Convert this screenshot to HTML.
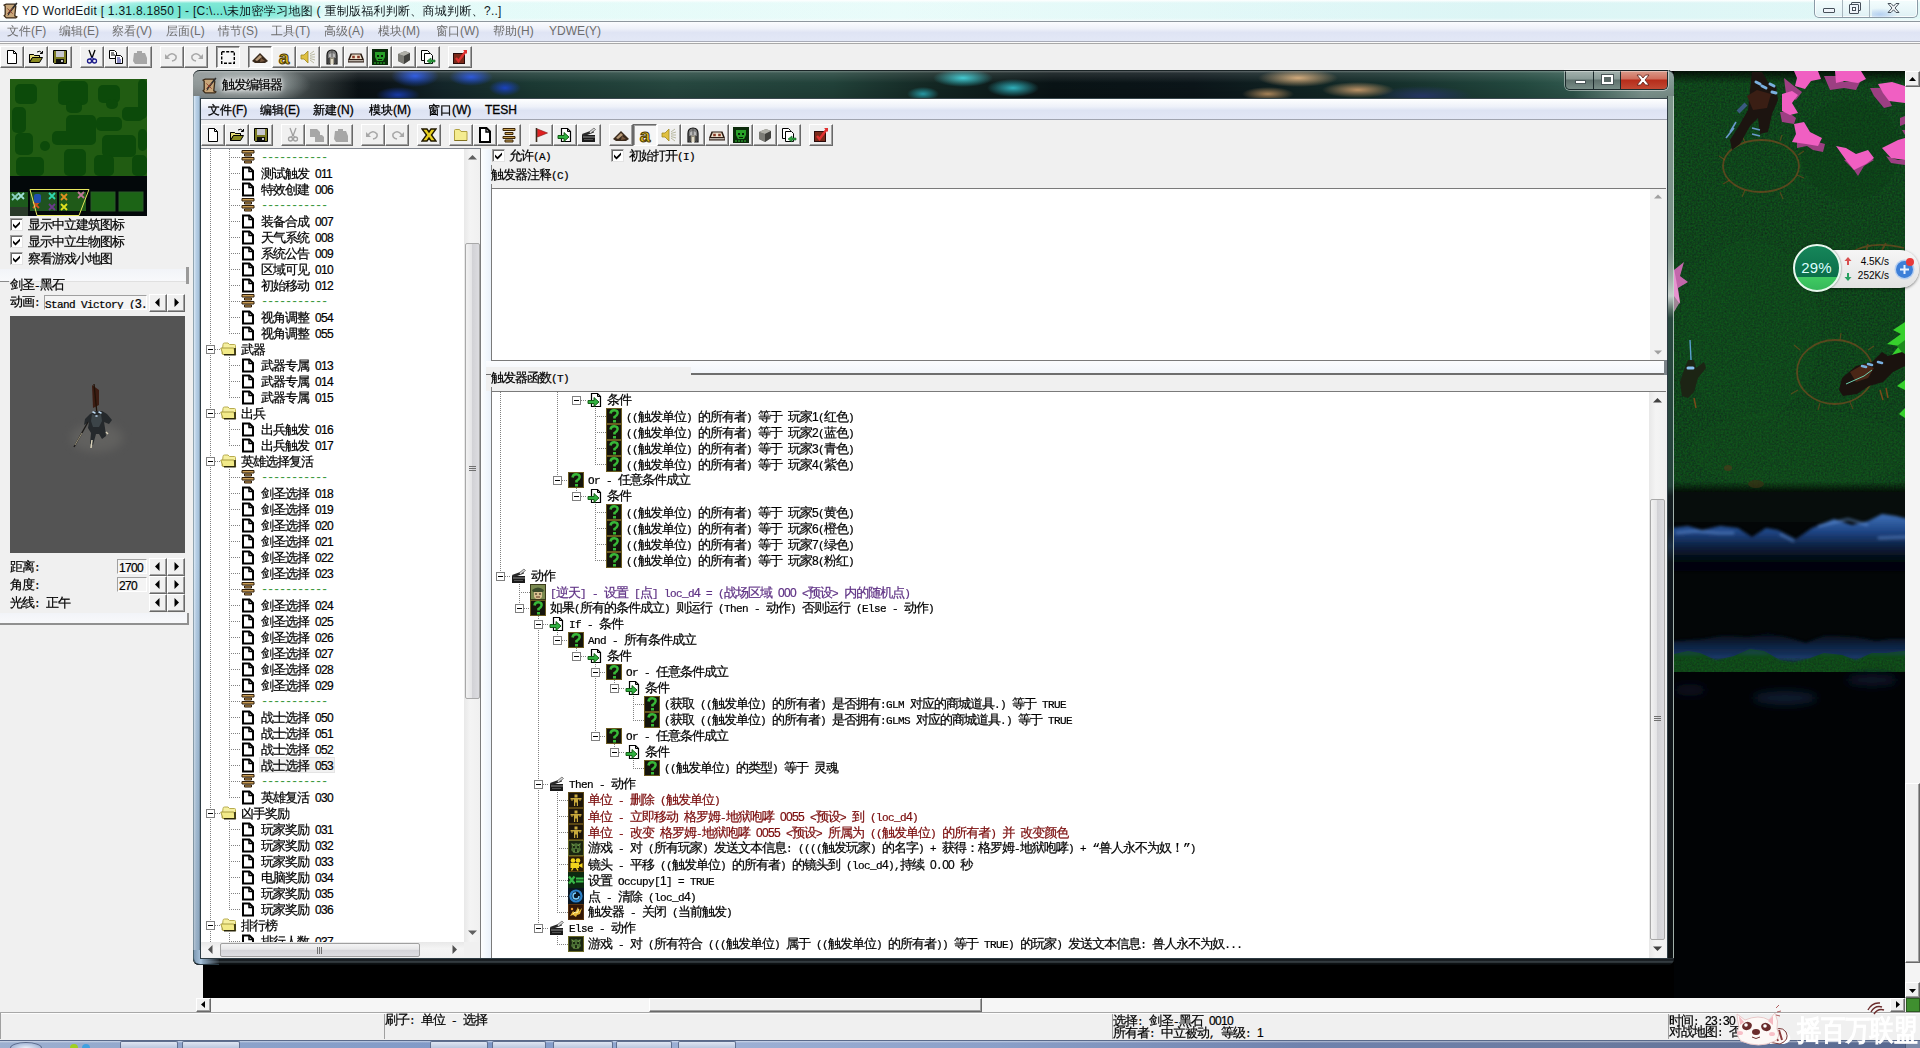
<!DOCTYPE html>
<html lang="zh-CN"><head><meta charset="utf-8"><title>YD WorldEdit</title>
<style>

html,body{margin:0;padding:0;}
body{width:1920px;height:1048px;overflow:hidden;position:relative;background:#f0f0f0;
 font-family:"Liberation Sans","WenQuanYi Zen Hei",sans-serif;font-size:12px;color:#000;}
div{position:absolute;box-sizing:border-box;}
svg{position:absolute;overflow:visible;}
.t{white-space:nowrap;line-height:14px;height:14px;}
.s{font-family:"Liberation Mono","WenQuanYi Zen Hei",monospace;font-size:13px;letter-spacing:-1px;margin-top:1px;-webkit-text-stroke-width:0.22px;}
.s .l{font-size:11px;letter-spacing:-0.6px;}
.s .d{font-family:"Liberation Sans",sans-serif;font-size:12px;letter-spacing:-0.674px;}
.u{font-family:"Liberation Sans","WenQuanYi Zen Hei",sans-serif;font-size:12px;}
.btn{background:#f0f0f0;border:1px solid;border-color:#fff #696969 #696969 #fff;box-shadow:inset -1px -1px 0 #a0a0a0;}
.btnp{background:#f6f6f6;border:1px solid;border-color:#696969 #fff #fff #696969;box-shadow:inset 1px 1px 0 #a0a0a0;}
.sunk{border:1px solid;border-color:#a0a0a0 #fff #fff #a0a0a0;}
.cb{width:13px;height:13px;background:#fff;border:1px solid;border-color:#a0a0a0 #e3e3e3 #e3e3e3 #a0a0a0;box-shadow:inset 1px 1px 0 #696969;}

</style></head>
<body>
<svg width="0" height="0" style="left:0;top:0"><defs><symbol id="i-we" viewBox="0 0 16 16"><path d="M2 3l2-1h8l1 2-1 9 2 1-1 1H4l-2-2 1-1V4z" fill="#c9a77a" stroke="#3a2a18" stroke-width="1.2"/><path d="M6 11L14 1" stroke="#2a2a2a" stroke-width="1.6"/><path d="M6 11l-1 2 2-1z" fill="#222"/><path d="M5 6l5 5M10 6l-5 5" stroke="#8a3a2a" stroke-width=".8"/></symbol><symbol id="i-new" viewBox="0 0 16 16"><path d="M3.500 1.500h6l3 3v10h-9z" fill="#fff" stroke="#000"/><path d="M9.500 1.500v3h3" fill="none" stroke="#000"/></symbol><symbol id="i-open" viewBox="0 0 16 16"><path d="M1.500 5.500h4l1 1h5v2" fill="#e8e080" stroke="#000" /><path d="M1.500 13.500v-8h4l1 1h5v2h-7z" fill="#e6dc78" stroke="#000"/><path d="M1.500 13.500l3-5h10l-3 5z" fill="#8a8a20" stroke="#000"/><path d="M9 3q3-2 5 1" fill="none" stroke="#000"/><path d="M14.500 2v2.500H12" fill="none" stroke="#000"/></symbol><symbol id="i-save" viewBox="0 0 16 16"><path d="M1.500 1.500h13v13h-12l-1-1z" fill="#7a7a22" stroke="#000"/><rect x="4" y="2" width="8" height="6" fill="#c8c8d0"/><rect x="4" y="10" width="8" height="4" fill="#101010"/><rect x="9" y="11" width="2" height="2" fill="#c8c8c8"/></symbol><symbol id="i-cut" viewBox="0 0 16 16"><path d="M5 1l3 8M11 1L8 9" stroke="#000" stroke-width="1.300" fill="none"/><circle cx="5.500" cy="12" r="2" fill="none" stroke="#1a1a8a" stroke-width="1.300"/><circle cx="10.500" cy="12" r="2" fill="none" stroke="#1a1a8a" stroke-width="1.300"/><path d="M8 8l-2 2.500M8 8l2 2.500" stroke="#1a1a8a" stroke-width="1.200"/></symbol><symbol id="i-cut-d" viewBox="0 0 16 16"><path d="M5 1l3 8M11 1L8 9" stroke="#a0a0a0" stroke-width="1.300" fill="none"/><circle cx="5.500" cy="12" r="2" fill="none" stroke="#a0a0a0" stroke-width="1.300"/><circle cx="10.500" cy="12" r="2" fill="none" stroke="#a0a0a0" stroke-width="1.300"/><path d="M8 8l-2 2.500M8 8l2 2.500" stroke="#a0a0a0" stroke-width="1.200"/></symbol><symbol id="i-copy" viewBox="0 0 16 16"><path d="M1.500 1.500h5l2 2v6h-7z" fill="#fff" stroke="#000"/><path d="M3 4h3M3 6h4" stroke="#000"/><path d="M7.500 6.500h5l2 2v6h-7z" fill="#fff" stroke="#000"/><path d="M9 9h3M9 11h4M9 13h4" stroke="#1a1a8a"/></symbol><symbol id="i-copy-d" viewBox="0 0 16 16"><path d="M1 2h7l3 3v3h2l2 2v5H6V10H1z" fill="#a6a6a6"/></symbol><symbol id="i-paste-d" viewBox="0 0 16 16"><path d="M2 4h3V2h5v2h3l2 5v6H3L1 12z" fill="#a6a6a6"/></symbol><symbol id="i-undo-d" viewBox="0 0 16 16"><path d="M3 8q5-6 9-1q1 4-4 5" fill="none" stroke="#a8a8a8" stroke-width="1.600"/><path d="M1 5v5h5z" fill="#a8a8a8"/></symbol><symbol id="i-redo-d" viewBox="0 0 16 16"><path d="M13 8q-5-6-9-1q-1 4 4 5" fill="none" stroke="#a8a8a8" stroke-width="1.600"/><path d="M15 5v5h-5z" fill="#a8a8a8"/></symbol><symbol id="i-select" viewBox="0 0 16 16"><rect x="1.700" y="2.700" width="12.600" height="11.600" fill="none" stroke="#000" stroke-width="1.400" stroke-dasharray="3 1.500"/></symbol><symbol id="i-terrain" viewBox="0 0 16 16"><path d="M0 12L8 4l8 8-3 2H3z" fill="#3a2a1c"/><path d="M3 11l5-5 2 2-5 4z" fill="#b89a78"/><path d="M9 9l4 3-5 1z" fill="#7a5a40"/></symbol><symbol id="i-a" viewBox="0 0 16 16"><text x="8" y="14.500" font-family="Liberation Sans,sans-serif" font-weight="bold" font-size="19" text-anchor="middle" fill="#e6c020" stroke="#4a3806" stroke-width="1">a</text></symbol><symbol id="i-sound" viewBox="0 0 16 16"><path d="M1 6h3l4-4v12l-4-4H1z" fill="#e0c040" stroke="#a08820" stroke-width=".8"/><path d="M10 8h5M10 5l4-3M10 11l4 3M10 6.500l5-1.500M10 9.500l5 1.500" stroke="#b8b8a0" stroke-width="1"/></symbol><symbol id="i-helm" viewBox="0 0 16 16"><path d="M3 15V6.500Q3 1 8 1t5 5.500V15h-3.200V9.500H6.200V15z" fill="#7c7c7c" stroke="#101010" stroke-width="1.200"/><path d="M5 5.500Q8 2.500 11 5.500V8H5z" fill="#b8b8b8"/><path d="M4.500 9v5M11.500 9v5" stroke="#404040" stroke-width="1"/><path d="M7 8.500V15M9 8.500V15" stroke="#d8cfb4" stroke-width="1.300"/><path d="M8 2v6" stroke="#505050" stroke-width="1"/></symbol><symbol id="i-region" viewBox="0 0 16 16"><path d="M0 11l2.500-6.500h11L16 11v2.500H0z" fill="#2a1a12"/><path d="M2 10l1.800-4.500h8.400L14 10z" fill="#efe2cc"/><path d="M4.200 6.800h2.600v2.400H4.200zM9.200 6.800h2.600v2.400H9.200z" fill="#8a3a28"/><path d="M.5 11.800h15" stroke="#f6efe6" stroke-width="1"/></symbol><symbol id="i-orc" viewBox="0 0 16 16"><rect x="0" y="0" width="16" height="16" fill="#0a2a0a"/><path d="M3 3h10v5l-2 4H5L3 8z" fill="#28a028"/><path d="M5 6h2v2H5zM9 6h2v2H9zM6 10h4v1H6z" fill="#062006"/><path d="M2 14h2M5 14h2M8 14h2M11 14h2" stroke="#30c030"/></symbol><symbol id="i-cube" viewBox="0 0 16 16"><path d="M2 5l7-3 5 2v7l-6 4-6-3z" fill="#70706c"/><path d="M2 5l6 2 6-3-5-2z" fill="#b0b0a8"/><path d="M8 7v8l6-4V4z" fill="#42423e"/><path d="M2 5l6 2v8l-6-3z" fill="#7c7c76"/></symbol><symbol id="i-import" viewBox="0 0 16 16"><path d="M1.500 1.500h6l2 2v8h-8z" fill="#fff" stroke="#000"/><path d="M4.500 4.500h6l2 2v8h-8z" fill="#fff" stroke="#000"/><path d="M15 11h-4V9l-4 3 4 3v-2h4z" fill="#30a040" stroke="#106020" stroke-width=".6"/></symbol><symbol id="i-check" viewBox="0 0 16 16"><rect x="1.500" y="4.500" width="11" height="10" fill="#7a2a1a" stroke="#2a0a0a"/><path d="M4 9l2.500 3L14 2" fill="none" stroke="#e03030" stroke-width="2.400"/><path d="M11 1h4v4z" fill="#e03030"/></symbol><symbol id="i-x" viewBox="0 0 16 16"><path d="M1 2h5l2 3 2-3h5l-4.500 6L15 14h-5L8 11l-2 3H1l4.500-6z" fill="#e8d020" stroke="#201800" stroke-width="1.400"/></symbol><symbol id="i-folder" viewBox="0 0 16 16"><path d="M1.500 3.500q0-1 1-1h4l1.500 2h6v9h-12.500z" fill="#f4ec90" stroke="#b0a040"/><path d="M1.500 13.500h12.500" stroke="#807020"/></symbol><symbol id="i-doc" viewBox="0 0 16 16"><path d="M3 1h6.500L13 4.500V15H3z" fill="#fff" stroke="#000" stroke-width="2"/><path d="M9 1v4h4" fill="none" stroke="#000" stroke-width="1.400"/></symbol><symbol id="i-sep" viewBox="0 0 16 16"><path d="M2 1.500h12v2H2zM4 5.500h8v2H4zM2 9.500h12v2H2zM4 13h8v2H4z" fill="#c8a050" stroke="#3a2408" stroke-width="1"/></symbol><symbol id="i-flag" viewBox="0 0 16 16"><path d="M3.500 1v14" stroke="#3a2a1a" stroke-width="1.600"/><path d="M4.500 2l10 4-10 4z" fill="#e02020" stroke="#801010" stroke-width=".6"/></symbol><symbol id="i-cond" viewBox="0 0 16 16"><path d="M4.500 1.500h6l3 3v10h-9z" fill="#fff" stroke="#000" stroke-width="1.200"/><path d="M10.500 1.500v3h3" fill="none" stroke="#000"/><path d="M1 8.500h6v-3l5 4.500-5 4.500v-3H1z" fill="#30b040" stroke="#0a500a" stroke-width=".9"/></symbol><symbol id="i-act" viewBox="0 0 16 16"><path d="M1 8h13v7H1z" fill="#1a1a1a"/><path d="M1 7l11-4 1 2.500L2 9.500z" fill="#2a2a2a"/><path d="M2 10h12" stroke="#909090"/><path d="M8 5l5-4 1.500 1.500-5 4z" fill="#d8d8d8" stroke="#404040" stroke-width=".6"/><path d="M3 12.500h9" stroke="#505050"/></symbol><symbol id="i-q" viewBox="0 0 16 16"><rect x="0" y="0" width="16" height="16" fill="#15140c"/><rect x=".5" y=".5" width="15" height="15" fill="none" stroke="#6a5a20"/><path d="M4.500 5.500Q5 2 8.500 2.200T11.500 5.500Q11 7.500 8.500 9V10.500" fill="none" stroke="#38b838" stroke-width="2.600"/><rect x="7" y="12" width="3" height="2.500" fill="#38b838"/></symbol><symbol id="i-unit" viewBox="0 0 16 16"><rect x="0" y="0" width="16" height="16" fill="#1c150a"/><rect x=".5" y=".5" width="15" height="15" fill="none" stroke="#5a4614"/><rect x="6.500" y="2.500" width="3" height="3" fill="#c9a93c"/><path d="M2.500 6h11v1.500h-1V9h-1V7.500H10V14H8.800v-3.500H7.200V14H6V7.500H4.500V9h-1V7.500h-1z" fill="#c9a93c"/></symbol><symbol id="i-game" viewBox="0 0 16 16"><rect x="0" y="0" width="16" height="16" fill="#1a2410"/><rect x=".5" y=".5" width="15" height="15" fill="none" stroke="#6a6a28"/><path d="M3 3l3 1 2-1 2 1 3-1-1 4 1 3-3 3H6L3 10l1-3z" fill="#4a6e34"/><path d="M5 6h2v2H5zM9 6h2v2H9zM7 9h2v3H7z" fill="#1c2a12"/><path d="M4 4l2 2M12 4l-2 2M5 12l2-1M11 12l-2-1" stroke="#7a9a4a" stroke-width=".8"/></symbol><symbol id="i-cam" viewBox="0 0 16 16"><rect x="0" y="0" width="16" height="16" fill="#2a1c08"/><rect x=".5" y=".5" width="15" height="15" fill="none" stroke="#5a4210"/><circle cx="5" cy="4.500" r="2.300" fill="#f2d41c"/><circle cx="10" cy="4.500" r="2.300" fill="#f2d41c"/><path d="M2.500 7h8.500v5H2.500z" fill="#f2d41c"/><path d="M11 9l3.500-2v5L11 10z" fill="#f2d41c"/><path d="M5 12l-1.500 2.500M8.500 12l1.500 2.500" stroke="#f2d41c" stroke-width="1.400"/></symbol><symbol id="i-set" viewBox="0 0 16 16"><rect x="0" y="0" width="16" height="16" fill="#0c2a10"/><path d="M1 4.500l5.500 7M6.500 4.500l-5.500 7" stroke="#38b848" stroke-width="2.200"/><path d="M8 6.500h7.500M8 9.500h7.500" stroke="#38b848" stroke-width="1.800"/></symbol><symbol id="i-point" viewBox="0 0 16 16"><rect x="0" y="0" width="16" height="16" fill="#0a1622"/><circle cx="8" cy="8" r="5.500" fill="none" stroke="#2a80c8" stroke-width="2.200"/><path d="M8 5a3 3 0 1 0 3 3" fill="none" stroke="#7ad0ff" stroke-width="1.400"/><circle cx="8" cy="8" r="1" fill="#0a1622"/></symbol><symbol id="i-trig" viewBox="0 0 16 16"><rect x="0" y="0" width="16" height="16" fill="#321606"/><rect x=".5" y=".5" width="15" height="15" fill="none" stroke="#5a3410"/><path d="M2 12l3-5 2 2 3-6 1 4 3-3-2 6-3 1-1 2-3-2z" fill="#e8b83a"/><path d="M5 10l2-2 2 1 2-4" stroke="#fff0a0" stroke-width="1" fill="none"/><circle cx="4" cy="5" r="1.200" fill="#f0a030"/></symbol><symbol id="i-nt" viewBox="0 0 16 16"><rect x="0" y="0" width="16" height="16" fill="#7a8a50"/><rect x=".5" y=".5" width="15" height="15" fill="none" stroke="#3a3a1a"/><path d="M2 6q6-5 12 0l-1 2H3z" fill="#3a4a2a"/><path d="M4 8h8v5l-2 2H6l-2-2z" fill="#d8c090"/><path d="M5 10h2M9 10h2" stroke="#201808"/><path d="M6 13h4" stroke="#5a3020"/></symbol><symbol id="i-tdoc" viewBox="0 0 14 15"><path d="M2 1.500h6.500L12 5v8.500H2z" fill="#fff" stroke="#000" stroke-width="2"/><path d="M8 1.500V5.500h4" fill="none" stroke="#000" stroke-width="1.500"/></symbol><symbol id="i-tsep" viewBox="0 0 14 14"><path d="M1 .5h12v2.500H1zM3.500 4h7v2h-7zM1 7.500h12V10H1zM3.500 11h7v2h-7z" fill="#c89c54" stroke="#2e1c08" stroke-width="1"/></symbol><symbol id="i-tfolder" viewBox="0 0 17 16"><path d="M3 3.500q0-1.500 1.500-1.500h3.500l1.500 1.500h5q1 0 1 1V13H2z" fill="#f6f0a0" stroke="#b8ac50" stroke-width="1"/><path d="M.8 7h13l2 6.500H3z" fill="#f2ea88" stroke="#a89c40" stroke-width="1"/><path d="M15 7v6.800H4" fill="none" stroke="#2a2608" stroke-width="1.600"/></symbol></defs></svg>
<div style="left:0px;top:0px;width:1920px;height:21px;background:linear-gradient(90deg,#ffffff 0,#fbfffe 76px,rgba(255,255,255,0) 92px),radial-gradient(ellipse 120px 14px at 205px 11px,#6fe3cf 0,#7fe8d6 55%,rgba(150,238,225,.75) 85%,rgba(190,245,238,.2) 100%),linear-gradient(90deg,#e9fbfa 0,#eefcfb 500px,#f4fdfd 900px,#e3f5f7 1500px,#eaf8f9 1920px);"></div>
<div style="left:0px;top:0px;width:1920px;height:3px;background:linear-gradient(#ffffff,rgba(255,255,255,0));"></div>
<div style="left:0px;top:18px;width:1920px;height:3px;background:linear-gradient(rgba(255,255,255,0),#f4fbfb);"></div>
<div style="left:0px;top:21px;width:1920px;height:1px;background:#8e979e;"></div>
<svg style="left:2px;top:2px" width="17" height="17" viewBox="0 0 16 16"><use href="#i-we"/></svg>
<div class="t u" style="left:22px;top:4px;font-size:12px;color:#10181c;letter-spacing:0.27px;">YD WorldEdit [ 1.31.8.1850 ] - [C:\...\未加密学习地图 ( 重制版福利判断、商城判断、?..]</div>
<div style="left:1814px;top:0px;width:104px;height:18px;border:1px solid #8a9aa6;border-top:none;border-radius:0 0 5px 5px;background:linear-gradient(#f4fdfd,#e9f7f9 55%,#def0f4);box-shadow:inset 0 0 0 1px rgba(255,255,255,.8);"></div>
<div style="left:1842px;top:0px;width:1px;height:17px;background:#a8b6be;"></div>
<div style="left:1869px;top:0px;width:1px;height:17px;background:#a8b6be;"></div>
<div style="left:1872px;top:8px;width:26px;height:9px;background:radial-gradient(ellipse at 30% 70%,rgba(170,200,240,.8),rgba(200,225,250,0) 70%);"></div>
<div style="left:1823px;top:8px;width:12px;height:5px;border:1px solid #46505a;background:#eef4fa;border-radius:1px;"></div>
<div style="left:1851px;top:2px;width:10px;height:9px;border:1px solid #46505a;background:#eef4fa;border-radius:1px;"></div>
<div style="left:1849px;top:4px;width:10px;height:10px;border:1px solid #46505a;background:#eef4fa;border-radius:1px;"></div>
<div style="left:1852px;top:7px;width:4px;height:4px;border:1px solid #46505a;background:#fff;"></div>
<svg style="left:1887px;top:3px" width="13" height="10" viewBox="0 0 13 10"><path d="M1 .5h3l2.500 2.700L9 .5h3L8 5l4 4.500H9L6.500 6.800 4 9.500H1L5 5z" fill="#f4f8fa" stroke="#46505a" stroke-width="1"/></svg>
<div style="left:0px;top:22px;width:1920px;height:20px;background:linear-gradient(#fbfcfe 0,#eef1f9 35%,#dfe4f4 55%,#e3e8f6 100%);border-bottom:1px solid #a9acb8;"></div>
<div style="left:0px;top:42px;width:1920px;height:1px;background:#fbfbfb;"></div>
<div style="left:0px;top:43px;width:1920px;height:1px;background:#a9a9a9;"></div>
<div class="t u" style="left:7px;top:24px;color:#6d6d6d;">文件(F)</div>
<div class="t u" style="left:59px;top:24px;color:#6d6d6d;">编辑(E)</div>
<div class="t u" style="left:112px;top:24px;color:#6d6d6d;">察看(V)</div>
<div class="t u" style="left:166px;top:24px;color:#6d6d6d;">层面(L)</div>
<div class="t u" style="left:218px;top:24px;color:#6d6d6d;">情节(S)</div>
<div class="t u" style="left:271px;top:24px;color:#6d6d6d;">工具(T)</div>
<div class="t u" style="left:324px;top:24px;color:#6d6d6d;">高级(A)</div>
<div class="t u" style="left:378px;top:24px;color:#6d6d6d;">模块(M)</div>
<div class="t u" style="left:436px;top:24px;color:#6d6d6d;">窗口(W)</div>
<div class="t u" style="left:493px;top:24px;color:#6d6d6d;">帮助(H)</div>
<div class="t u" style="left:549px;top:24px;color:#6d6d6d;">YDWE(Y)</div>
<div style="left:0px;top:44px;width:1920px;height:27px;background:#f0f0f0;"></div>
<div class="btn" style="left:0px;top:46px;width:24px;height:22px;"><svg style="left:3px;top:2px" width="16" height="16" viewBox="0 0 16 16"><use href="#i-new"/></svg></div>
<div class="btn" style="left:24px;top:46px;width:24px;height:22px;"><svg style="left:3px;top:2px" width="16" height="16" viewBox="0 0 16 16"><use href="#i-open"/></svg></div>
<div class="btn" style="left:48px;top:46px;width:24px;height:22px;"><svg style="left:3px;top:2px" width="16" height="16" viewBox="0 0 16 16"><use href="#i-save"/></svg></div>
<div class="btn" style="left:80px;top:46px;width:24px;height:22px;"><svg style="left:3px;top:2px" width="16" height="16" viewBox="0 0 16 16"><use href="#i-cut"/></svg></div>
<div class="btn" style="left:104px;top:46px;width:24px;height:22px;"><svg style="left:3px;top:2px" width="16" height="16" viewBox="0 0 16 16"><use href="#i-copy"/></svg></div>
<div class="btn" style="left:128px;top:46px;width:24px;height:22px;"><svg style="left:3px;top:2px" width="16" height="16" viewBox="0 0 16 16"><use href="#i-paste-d"/></svg></div>
<div class="btn" style="left:160px;top:46px;width:24px;height:22px;"><svg style="left:3px;top:2px" width="16" height="16" viewBox="0 0 16 16"><use href="#i-undo-d"/></svg></div>
<div class="btn" style="left:184px;top:46px;width:24px;height:22px;"><svg style="left:3px;top:2px" width="16" height="16" viewBox="0 0 16 16"><use href="#i-redo-d"/></svg></div>
<div class="btnp" style="left:216px;top:46px;width:24px;height:22px;"><svg style="left:3px;top:2px" width="16" height="16" viewBox="0 0 16 16"><use href="#i-select"/></svg></div>
<div class="btnp" style="left:248px;top:46px;width:24px;height:22px;"><svg style="left:3px;top:2px" width="16" height="16" viewBox="0 0 16 16"><use href="#i-terrain"/></svg></div>
<div class="btn" style="left:272px;top:46px;width:24px;height:22px;"><svg style="left:3px;top:2px" width="16" height="16" viewBox="0 0 16 16"><use href="#i-a"/></svg></div>
<div class="btn" style="left:296px;top:46px;width:24px;height:22px;"><svg style="left:3px;top:2px" width="16" height="16" viewBox="0 0 16 16"><use href="#i-sound"/></svg></div>
<div class="btn" style="left:320px;top:46px;width:24px;height:22px;"><svg style="left:3px;top:2px" width="16" height="16" viewBox="0 0 16 16"><use href="#i-helm"/></svg></div>
<div class="btn" style="left:344px;top:46px;width:24px;height:22px;"><svg style="left:3px;top:2px" width="16" height="16" viewBox="0 0 16 16"><use href="#i-region"/></svg></div>
<div class="btn" style="left:368px;top:46px;width:24px;height:22px;"><svg style="left:3px;top:2px" width="16" height="16" viewBox="0 0 16 16"><use href="#i-orc"/></svg></div>
<div class="btn" style="left:392px;top:46px;width:24px;height:22px;"><svg style="left:3px;top:2px" width="16" height="16" viewBox="0 0 16 16"><use href="#i-cube"/></svg></div>
<div class="btn" style="left:416px;top:46px;width:24px;height:22px;"><svg style="left:3px;top:2px" width="16" height="16" viewBox="0 0 16 16"><use href="#i-import"/></svg></div>
<div class="btn" style="left:448px;top:46px;width:24px;height:22px;"><svg style="left:3px;top:2px" width="16" height="16" viewBox="0 0 16 16"><use href="#i-check"/></svg></div>
<div style="left:196px;top:71px;width:1709px;height:927px;background:#000;"></div>
<div style="left:190px;top:71px;width:13px;height:927px;background:#f0f0f0;"></div>
<div style="left:1905px;top:71px;width:15px;height:927px;background:#f4f4f4;"></div>
<div class="btn" style="left:1905px;top:71px;width:15px;height:16px;"><svg style="left:3px;top:4px" width="8" height="6" viewBox="0 0 8 6"><path d="M0 5h7L3.500 1z" fill="#000"/></svg></div>
<div class="btn" style="left:1905px;top:982px;width:15px;height:16px;"><svg style="left:3px;top:5px" width="8" height="6" viewBox="0 0 8 6"><path d="M0 1h7L3.500 5z" fill="#000"/></svg></div>
<div class="btn" style="left:1905px;top:783px;width:15px;height:180px;"></div>
<div style="left:196px;top:998px;width:1709px;height:14px;background:#f6f6f6;"></div>
<div class="btn" style="left:196px;top:998px;width:15px;height:14px;"><svg style="left:3px;top:2px" width="6" height="8" viewBox="0 0 6 8"><path d="M5 0v7L1 3.500z" fill="#000"/></svg></div>
<div class="btn" style="left:1890px;top:998px;width:15px;height:14px;"><svg style="left:4px;top:2px" width="6" height="8" viewBox="0 0 6 8"><path d="M1 0v7l4-3.500z" fill="#000"/></svg></div>
<div class="btn" style="left:649px;top:998px;width:333px;height:14px;"></div>
<div style="left:1906px;top:998px;width:14px;height:14px;background:#3f8f2f;border:1px solid #2a5a1f;"></div>
<div style="left:0px;top:71px;width:190px;height:941px;background:#f0f0f0;"></div>
<svg style="left:10px;top:79px" width="137" height="137" viewBox="0 0 137 137"><rect width="137" height="137" fill="#03080a"/><rect width="137" height="97" fill="#215c12"/><rect x="5" y="5" width="22" height="20" rx="5" fill="#0c4a0a"/><rect x="2" y="28" width="14" height="26" rx="5" fill="#0c4a0a"/><rect x="48" y="2" width="30" height="24" rx="5" fill="#0c4a0a"/><rect x="56" y="22" width="16" height="12" rx="5" fill="#0c4a0a"/><rect x="88" y="6" width="22" height="18" rx="5" fill="#0c4a0a"/><rect x="96" y="20" width="12" height="10" rx="5" fill="#0c4a0a"/><rect x="128" y="0" width="9" height="40" rx="5" fill="#0c4a0a"/><rect x="112" y="28" width="22" height="14" rx="5" fill="#0c4a0a"/><rect x="5" y="54" width="18" height="22" rx="5" fill="#0c4a0a"/><rect x="42" y="52" width="24" height="14" rx="5" fill="#0c4a0a"/><rect x="56" y="36" width="30" height="30" rx="5" fill="#0c4a0a"/><rect x="86" y="38" width="26" height="14" rx="5" fill="#0c4a0a"/><rect x="92" y="56" width="34" height="22" rx="5" fill="#0c4a0a"/><rect x="128" y="50" width="9" height="22" rx="5" fill="#0c4a0a"/><rect x="6" y="78" width="28" height="19" rx="5" fill="#0c4a0a"/><rect x="54" y="70" width="22" height="27" rx="5" fill="#0c4a0a"/><rect x="84" y="76" width="20" height="21" rx="5" fill="#0c4a0a"/><rect x="122" y="76" width="15" height="21" rx="5" fill="#0c4a0a"/><rect x="30" y="62" width="10" height="10" rx="5" fill="#0c4a0a"/><rect x="0" y="113" width="18" height="19" fill="#1d5a1c"/><rect x="0" y="128" width="18" height="9" fill="#2a3a2a"/><rect x="20" y="113" width="27" height="19" fill="#1f5220"/><rect x="49" y="113" width="27" height="19" fill="#1f5a18"/><rect x="81" y="113" width="24" height="19" fill="#1c6416" stroke="#2a5a28"/><rect x="109" y="113" width="24" height="19" fill="#1c6416" stroke="#2a5a28"/><path d="M2 115l6 6M8 115l-6 6" stroke="#8ad0c0" stroke-width="1.800"/><path d="M8 114l6 6M14 114l-6 6" stroke="#a0e0d8" stroke-width="1.800"/><path d="M39 114l6 6M45 114l-6 6" stroke="#30d8b0" stroke-width="1.800"/><path d="M51 115l6 6M57 115l-6 6" stroke="#e09020" stroke-width="1.800"/><path d="M68 113l6 6M74 113l-6 6" stroke="#c07898" stroke-width="1.800"/><path d="M51 125l6 6M57 125l-6 6" stroke="#e0e020" stroke-width="1.800"/><path d="M23 123l6 6M29 123l-6 6" stroke="#d05020" stroke-width="1.800"/><path d="M39 125l6 6M45 125l-6 6" stroke="#6a3a8a" stroke-width="1.800"/><rect x="24" y="115" width="7" height="9" rx="2" fill="#2050b0"/><path d="M20 110.500H79L69 136.500H27z" fill="none" stroke="#e8e860" stroke-width="1"/></svg>
<div class="cb" style="left:10px;top:218px;width:13px;height:13px;"><svg style="left:1px;top:1px" width="9" height="9" viewBox="0 0 9 9"><path d="M1 3.500l2.500 2.500L8 1.500v2.500L3.500 8.500 1 6z" fill="#000"/></svg></div>
<div class="t s" style="left:28px;top:218px;">显示中立建筑图标</div>
<div class="cb" style="left:10px;top:235px;width:13px;height:13px;"><svg style="left:1px;top:1px" width="9" height="9" viewBox="0 0 9 9"><path d="M1 3.500l2.500 2.500L8 1.500v2.500L3.500 8.500 1 6z" fill="#000"/></svg></div>
<div class="t s" style="left:28px;top:235px;">显示中立生物图标</div>
<div class="cb" style="left:10px;top:252px;width:13px;height:13px;"><svg style="left:1px;top:1px" width="9" height="9" viewBox="0 0 9 9"><path d="M1 3.500l2.500 2.500L8 1.500v2.500L3.500 8.500 1 6z" fill="#000"/></svg></div>
<div class="t s" style="left:28px;top:252px;">察看游戏小地图</div>
<div style="left:0px;top:269px;width:189px;height:13px;background:linear-gradient(#f2f4f8,#f8f9fb);border-right:2px solid #a0a0a0;border-bottom:1px solid #e0e0e0;"></div>
<div style="left:186px;top:267px;width:3px;height:17px;background:#9a9a9a;"></div>
<div style="left:0px;top:281px;width:9px;height:1px;background:#8a8a8a;"></div>
<div class="t s" style="left:10px;top:278px;">剑圣<span class="l">-</span>黑石</div>
<div class="t s" style="left:10px;top:295px;">动画<span class="l">:</span></div>
<div class="sunk" style="left:44px;top:295px;width:103px;height:15px;background:#f4f4f4;overflow:hidden;"><div class="t s" style="left:0px;top:0px;"><span class="l">Stand Victory (</span><span class="d">3</span><span class="l">.</span></div></div>
<div class="btn" style="left:149px;top:294px;width:18px;height:18px;"><svg style="left:5px;top:3px" width="5" height="9" viewBox="0 0 5 9"><path d="M4.500 0v9L0 4.500z" fill="#000"/></svg></div><div class="btn" style="left:167px;top:294px;width:18px;height:18px;"><svg style="left:6px;top:3px" width="5" height="9" viewBox="0 0 5 9"><path d="M.5 0v9L5 4.500z" fill="#000"/></svg></div>
<div style="left:10px;top:316px;width:175px;height:237px;background:#545454;"></div>
<svg style="left:60px;top:380px" width="80" height="80" viewBox="60 380 80 80"><defs><filter id="hb" x="-30%" y="-30%" width="160%" height="160%"><feGaussianBlur stdDeviation="5"/></filter></defs><ellipse cx="97" cy="438" rx="26" ry="14" fill="#767470" opacity=".4" filter="url(#hb)"/><path d="M92 385l7 5 0 15-6 3z" fill="#3c1c12"/><path d="M94 384l3 30" stroke="#201208" stroke-width="1.300"/><path d="M85 419l5-5 6-3 6 0 5 3 5 6-3 4-5-2 1 6 1 8-4 3-3-5-3 0-3 11-3-1 1-11-3-5 1-6-5 3z" fill="#25292c"/><path d="M92 414l4 2 5-2 1 7-3 6-6 0-2-6z" fill="#3c4448"/><path d="M93 412l2 1M99 412l2 1M96 416l1 0" stroke="#bcd8f0" stroke-width="1.600" stroke-linecap="round"/><path d="M74 447L88 422" stroke="#1c1a18" stroke-width="1.400"/><path d="M75 445L82 433" stroke="#c8c0a0" stroke-width=".7"/><path d="M92 440l-1 8M106 432l2 2" stroke="#d8d0b8" stroke-width="1.500"/></svg>
<div class="t s" style="left:10px;top:560px;">距离<span class="l">:</span></div>
<div class="sunk" style="left:117px;top:559px;width:30px;height:15px;background:#f4f4f4;overflow:hidden;"><div class="t s" style="left:1px;top:0px;"><span class="d">1700</span></div></div>
<div class="btn" style="left:149px;top:558px;width:18px;height:18px;"><svg style="left:5px;top:3px" width="5" height="9" viewBox="0 0 5 9"><path d="M4.500 0v9L0 4.500z" fill="#000"/></svg></div><div class="btn" style="left:167px;top:558px;width:18px;height:18px;"><svg style="left:6px;top:3px" width="5" height="9" viewBox="0 0 5 9"><path d="M.5 0v9L5 4.500z" fill="#000"/></svg></div>
<div class="t s" style="left:10px;top:578px;">角度<span class="l">:</span></div>
<div class="sunk" style="left:117px;top:577px;width:30px;height:15px;background:#f4f4f4;overflow:hidden;"><div class="t s" style="left:1px;top:0px;"><span class="d">270</span></div></div>
<div class="btn" style="left:149px;top:576px;width:18px;height:18px;"><svg style="left:5px;top:3px" width="5" height="9" viewBox="0 0 5 9"><path d="M4.500 0v9L0 4.500z" fill="#000"/></svg></div><div class="btn" style="left:167px;top:576px;width:18px;height:18px;"><svg style="left:6px;top:3px" width="5" height="9" viewBox="0 0 5 9"><path d="M.5 0v9L5 4.500z" fill="#000"/></svg></div>
<div class="t s" style="left:10px;top:596px;">光线<span class="l">: </span>正午</div>
<div class="btn" style="left:149px;top:594px;width:18px;height:18px;"><svg style="left:5px;top:3px" width="5" height="9" viewBox="0 0 5 9"><path d="M4.500 0v9L0 4.500z" fill="#000"/></svg></div><div class="btn" style="left:167px;top:594px;width:18px;height:18px;"><svg style="left:6px;top:3px" width="5" height="9" viewBox="0 0 5 9"><path d="M.5 0v9L5 4.500z" fill="#000"/></svg></div>
<div style="left:0px;top:613px;width:189px;height:12px;background:linear-gradient(#f2f4f8,#f8f9fb);border-right:2px solid #909090;border-bottom:2px solid #909090;"></div>
<svg style="left:1674px;top:71px;overflow:hidden" width="231" height="927" viewBox="1674 71 231 927"><defs><filter id="gn" x="0" y="0" width="100%" height="100%" color-interpolation-filters="sRGB"><feTurbulence type="fractalNoise" baseFrequency="0.55" numOctaves="2" seed="7" result="n"/><feColorMatrix type="matrix" values="0.1 0 0 0 0.02  0 0.44 0 0 0.05  0 0 0.12 0 0.05  0 0 0 0 1"/></filter><linearGradient id="gfade" x1="0" y1="0" x2="0" y2="1"><stop offset="0" stop-color="#000" stop-opacity=".75"/><stop offset=".03" stop-color="#000" stop-opacity="0"/><stop offset=".975" stop-color="#000" stop-opacity="0"/><stop offset="1" stop-color="#000" stop-opacity=".8"/></linearGradient><linearGradient id="b1" x1="0" y1="0" x2="0" y2="1"><stop offset="0" stop-color="#3f70b8"/><stop offset=".3" stop-color="#1f4686"/><stop offset=".6" stop-color="#0a1c38"/><stop offset=".85" stop-color="#030608"/><stop offset="1" stop-color="#030607"/></linearGradient><linearGradient id="b2" x1="0" y1="0" x2="0" y2="1"><stop offset="0" stop-color="#050a12"/><stop offset=".5" stop-color="#14305c"/><stop offset="1" stop-color="#234a88"/></linearGradient><filter id="wb" x="-5%" y="-20%" width="110%" height="140%"><feGaussianBlur stdDeviation="1.600"/></filter><filter id="wb2" x="-20%" y="-50%" width="140%" height="200%"><feGaussianBlur stdDeviation="4"/></filter></defs><rect x="1674" y="71" width="231" height="927" fill="#000"/><rect x="1674" y="71" width="231" height="421" fill="#0d431a"/><rect x="1674" y="71" width="231" height="421" filter="url(#gn)" opacity=".55"/><ellipse cx="1750" cy="330" rx="70" ry="90" fill="#14601f" opacity=".15"/><ellipse cx="1850" cy="150" rx="50" ry="50" fill="#0a3c14" opacity=".3"/><ellipse cx="1800" cy="450" rx="110" ry="40" fill="#16661f" opacity=".12"/><rect x="1674" y="71" width="231" height="421" fill="url(#gfade)"/><g fill="none" stroke="#8a4a20" stroke-width="1.800" opacity=".6"><ellipse cx="1761" cy="166" rx="38" ry="26"/><ellipse cx="1835" cy="372" rx="38" ry="32"/><path d="M1852 252q20-12 52-4"/><path d="M1856 258l-4-8m14 2l2-8m14 6l4-7"/></g><g stroke="#8a4c1c" stroke-width="1.200" opacity=".55"><path d="M1725 160l-6-4M1730 180l-7 4M1745 190l-3 7M1780 192l3 7M1797 175l7 3M1798 155l6-4M1780 141l2-6M1745 142l-3-6M1800 350l-6-5M1798 390l-7 4M1820 403l-2 7M1850 402l3 7M1868 350l6-4M1840 340l1-7"/></g><path d="M1784 78l10 8 8 6-6 8-10-6z" fill="#9c3f82"/><path d="M1794 71h24l3 8-10 2-6 8-10-3 2-8z" fill="#f05fc2"/><path d="M1824 76l12 0 8 6 16 0 -4 8-12-2-14 2z" fill="#9c3f82"/><path d="M1835 71h26l5 8-8 4-14-2-8 2z" fill="#f05fc2"/><path d="M1870 88l10 0 8 10 4 8-8 2-10-12z" fill="#9c3f82"/><path d="M1878 84l14-2 13 4v17l-16-2-6-8z" fill="#f05fc2"/><path d="M1780 112l8 0 8 6-2 6-12-2z" fill="#9c3f82"/><path d="M1782 94l10-3 6 4-6 8 6 10-8 2-8-4z" fill="#f05fc2"/><path d="M1797 142l14-2 14 4-2 8-10-2-6-4-10 2z" fill="#9c3f82"/><path d="M1794 124l10-2 6 10 12 6-4 8-12-2-14-2 4-8z" fill="#f05fc2"/><path d="M1844 160l10 10 4 6 6-10 10-6-4-2z" fill="#9c3f82"/><path d="M1836 146l10 2 10 6 12-4 6 8-8 6-12 6-8-10z" fill="#f05fc2"/><path d="M1886 156l12 4 7 0v5l-14-2z" fill="#9c3f82"/><path d="M1882 148l16-8 7-2v22l-14-2z" fill="#f05fc2"/><path d="M1900 118l5-2v8l-5 2zM1902 130l3 0v5z" fill="#9c3f82"/><path d="M1674 270l10-8-4 14 8 6-10 6 2 16-6-8z" fill="#f070d0" opacity=".8"/><path d="M1674 268v44l6-10z" fill="#ffb0e8" opacity=".6"/><path d="M1905 322l-12 8 8 4-14 10 12 2-8 10 14-2zM1905 380l-8 6 8 4zM1905 408l-6 6 6 4z" fill="#36d02c"/><path d="M1905 340l-8 6 8 10z" fill="#1c8a1c"/><g><path d="M1752 72l10 0 6 10 8 4 2 14-6 14-4 18-8 2-2-16-8 8-10 18-8 6-2-10 10-16 8-14 2-20z" fill="#1c1410"/><path d="M1747 96l10-6 14 4-4 14-14 2z" fill="#3a1e14"/><path d="M1756 82l4 2M1762 86l4 2M1770 84l4 2M1772 92l4 1" stroke="#7ab0e0" stroke-width="3" stroke-linecap="round"/><path d="M1730 132l6-10M1726 138l8-10M1752 128l8 2M1752 134l8 2" stroke="#6a9acc" stroke-width="1.600"/><path d="M1738 112l8-8" stroke="#3a5a80" stroke-width="4"/></g><g><path d="M1842 378l14-12 16-4 10-10 6 4 14-4 3 2v12l-12 6-10 10-14 4-12 8-14 2-4-6z" fill="#1a120e"/><path d="M1850 372l14-8 10 4-6 10-12 4z" fill="#4a2616"/><path d="M1862 366l4 1M1868 364l4 1M1878 362l4 1" stroke="#7ab0e0" stroke-width="2.600" stroke-linecap="round"/><path d="M1846 384l18-8 8-6" stroke="#70d0b0" stroke-width="1" fill="none"/><path d="M1880 390l3 10M1886 388l2 10" stroke="#7a4a1a" stroke-width="1.500"/></g><g><path d="M1688 360l6 0 2 8 8-6 2 6-8 10-4 14-6 6-6-2-2-14 4-12z" fill="#1c2414"/><path d="M1690 340l1 20" stroke="#5aa0d0" stroke-width="1.400"/><path d="M1688 368l5 0" stroke="#8ac0f0" stroke-width="3" stroke-linecap="round"/><path d="M1694 398l2 10" stroke="#7a4a1a" stroke-width="1.500"/></g><ellipse cx="1728" cy="468" rx="4" ry="3" fill="#4a3a1a" opacity=".7"/><ellipse cx="1756" cy="484" rx="8" ry="4" fill="#3a3014" opacity=".7"/><rect x="1674" y="492" width="231" height="210" fill="#030607"/><rect x="1674" y="492" width="231" height="30" fill="#070d0c"/><g filter="url(#wb)"><path d="M1664 529l24-3 14 4 18-4 18 2 14 9 14-9 12 2 18 9 16-11 22-9 18 6 16-4 14-7 14 2 20 5v50h-252z" fill="url(#b1)"/><path d="M1676 533l20-2 22 2 16 0M1780 534l14 7M1818 526l30-7 20 6M1878 538l30 -1" stroke="#6a9ae0" stroke-width="2.500" opacity=".5" fill="none"/><path d="M1664 642l40-3 20-4 24 2 20-4 18 4 20 6 20-8 30 2 20 4 14-2 30 0v22h-256z" fill="url(#b2)" opacity=".75"/></g><path d="M1664 656l24-5 12 2 16 7 18-4 16-7 14 2 16 9 14 2 16-4 14-5 18 2 14 5 16-7 14 0 24-3v22h-246z" fill="#0f4a17"/><rect x="1674" y="658" width="231" height="14" filter="url(#gn)" opacity=".4"/><path d="M1664 656l24-5 12 2 16 7 18-4 16-7 14 2 16 9 14 2 16-4 14-5 18 2 14 5 16-7 14 0 24-3v5h-246z" fill="#1b3c6e" opacity=".45" filter="url(#wb)"/><rect x="1674" y="672" width="231" height="326" fill="#010305"/><g filter="url(#wb2)"><ellipse cx="1785" cy="698" rx="32" ry="7" fill="#0d2038" opacity=".8"/><ellipse cx="1872" cy="680" rx="26" ry="6" fill="#0b1a2e" opacity=".8"/><ellipse cx="1690" cy="690" rx="16" ry="6" fill="#0a1626" opacity=".7"/></g></svg>
<div style="left:1826px;top:250px;width:93px;height:38px;border-radius:0 19px 19px 0;background:linear-gradient(#f6f6f6,#e2e2e2);box-shadow:0 1px 3px rgba(0,0,0,.5);"></div>
<div style="left:1793px;top:244px;width:48px;height:48px;border-radius:50%;background:linear-gradient(#16865a 0,#0b6e4a 71%,#3fca62 71%,#35b85a 100%);border:2px solid #e8f8ee;box-shadow:0 0 2px rgba(0,0,0,.6);"></div>
<div class="t u" style="left:1793px;top:259px;width:47px;text-align:center;color:#dff;font-size:15px;line-height:18px;height:18px;letter-spacing:.2px;">29%</div>
<div class="t u" style="left:1849px;top:255px;width:40px;text-align:right;font-size:10px;">4.5K/s</div>
<div class="t u" style="left:1849px;top:269px;width:40px;text-align:right;font-size:10px;">252K/s</div>
<svg style="left:1844px;top:257px" width="8" height="24" viewBox="0 0 8 24"><path d="M4 0l3.500 4H5v4H3V4H.5z" fill="#d85050"/><path d="M4 24l3.500-4H5v-4H3v4H.5z" fill="#28a060"/></svg>
<div style="left:1896px;top:261px;width:17px;height:17px;border-radius:50%;background:#3d7fd8;box-shadow:0 0 0 1.500px #b8d0f0;"></div>
<svg style="left:1900px;top:265px" width="9" height="9" viewBox="0 0 9 9"><path d="M3.500 0h2v3.500H9v2H5.500V9h-2V5.500H0v-2h3.500z" fill="#e8f2ff"/></svg>
<div style="left:1906px;top:258px;width:8px;height:8px;border-radius:50%;background:#e83a3a;"></div>
<div style="left:193px;top:70px;width:1481px;height:895px;border-radius:7px 7px 6px 6px;background:#0a1012;"></div>
<div style="left:193px;top:70px;width:1481px;height:30px;border-radius:7px 7px 0 0;background:radial-gradient(ellipse 62px 20px at 56px 15px,rgba(205,210,210,.8),rgba(170,178,178,.5) 60%,rgba(130,140,140,0) 100%),linear-gradient(90deg,#8e9696 0,#6e7878 70px,rgba(70,80,80,0) 165px),radial-gradient(ellipse 24px 11px at 222px 6px,#2050e0,rgba(24,60,190,0) 100%),radial-gradient(ellipse 22px 9px at 278px 7px,#1e4cd8,rgba(24,60,190,0) 100%),radial-gradient(ellipse 16px 8px at 312px 18px,#1c46c8,rgba(24,60,190,0) 100%),radial-gradient(ellipse 22px 8px at 205px 25px,#1a40b8,rgba(24,60,170,0) 100%),radial-gradient(ellipse 30px 9px at 770px 8px,#38c8d0,rgba(40,180,190,0) 100%),radial-gradient(ellipse 26px 9px at 820px 18px,#32b8c4,rgba(40,180,190,0) 100%),radial-gradient(ellipse 16px 7px at 730px 24px,#2aa8b4,rgba(40,180,190,0) 100%),radial-gradient(ellipse 40px 9px at 1105px 8px,#d0a674,rgba(200,160,110,0) 100%),radial-gradient(ellipse 36px 8px at 1165px 20px,#c89c6c,rgba(200,160,110,0) 100%),radial-gradient(ellipse 26px 7px at 1075px 24px,#b89060,rgba(200,160,110,0) 100%),radial-gradient(ellipse 50px 10px at 1230px 26px,#2a3c70,rgba(40,60,110,0) 100%),linear-gradient(90deg,rgba(0,0,0,0) 1380px,rgba(150,170,165,.75) 1450px,rgba(140,160,155,.8) 1481px),linear-gradient(90deg,#10181a 0,#0a1012 120px,#0c1418 190px,#14262a 250px,#1c3a34 340px,#274840 480px,#22423a 640px,#142824 740px,#0a1416 860px,#0c161a 1000px,#16302c 1200px,#244a40 1330px,#3a6258 1420px,#5a7870 1481px);"></div>
<div style="left:193px;top:70px;width:1481px;height:30px;border-radius:7px 7px 0 0;background:linear-gradient(rgba(255,255,255,.35) 0,rgba(255,255,255,.12) 2px,rgba(255,255,255,0) 12px,rgba(0,0,0,.15) 100%);border-top:1px solid rgba(30,40,44,.9);"></div>
<div style="left:193px;top:96px;width:8px;height:864px;background:linear-gradient(90deg,#49626e 0,#dbe9f6 1px,#b9d0e6 3px,#a6c1db 6px,#6e8290 7px);"></div>
<div style="left:193px;top:560px;width:8px;height:400px;background:linear-gradient(rgba(0,0,0,0),rgba(60,80,100,.25));"></div>
<div style="left:1667px;top:96px;width:7px;height:862px;background:linear-gradient(#80988e 0,#7a9088 155px,#9aaca4 180px,#c4ceca 200px,#5a7068 214px,#2a4a40 222px,#26443c 390px,#141e20 400px,#121a20 430px,#1a2e44 450px,#10181e 466px,#0c1012 100%);border-left:1px solid #30403c;border-right:1px solid rgba(200,216,208,.8);"></div>
<div style="left:193px;top:958px;width:1481px;height:7px;border-radius:0 0 6px 6px;background:linear-gradient(#3a4248 0,#161a1e 1px,#1c2226 3px,#4a545a 4px,#101416 5px,#05080a 7px);"></div>
<div style="left:193px;top:950px;width:26px;height:15px;border-radius:0 0 0 7px;background:linear-gradient(90deg,#7e9ab4 0,#a9c3dc 7px,#8aa4bc 9px,rgba(60,80,100,0) 26px);border-left:1px solid #49626e;border-bottom:1px solid #2a3a44;"></div>
<div style="left:201px;top:950px;width:20px;height:8px;background:#fff;"></div>
<div style="left:1565px;top:70px;width:103px;height:20px;border:1px solid #1c2a2c;border-top:none;border-radius:0 0 5px 5px;box-shadow:0 0 0 1px rgba(255,255,255,.45);overflow:hidden;"><div style="left:0px;top:0px;width:28px;height:20px;background:linear-gradient(#a8b6b2 0,#889a96 45%,#5e706c 50%,#7c908a 100%);border-right:1px solid #1c2a2c;"></div><div style="left:28px;top:0px;width:27px;height:20px;background:linear-gradient(#a8b6b2 0,#889a96 45%,#5e706c 50%,#7c908a 100%);border-right:1px solid #1c2a2c;"></div><div style="left:55px;top:0px;width:48px;height:20px;background:linear-gradient(#dba090 0,#cf6e5c 45%,#b62c1a 50%,#c24c36 100%);"></div></div>
<div style="left:1575px;top:80px;width:11px;height:4px;background:#fff;border:1px solid #4a5658;"></div>
<div style="left:1602px;top:75px;width:11px;height:9px;border:2px solid #fff;outline:1px solid #4a5658;background:#5a6866;"></div>
<svg style="left:1636px;top:74px" width="14" height="12" viewBox="0 0 14 12"><path d="M1 1h3.500L7 4l2.500-3H13L9 6l4 5H9.500L7 8l-2.500 3H1l4-5z" fill="#fff" stroke="#5a2018" stroke-width=".8"/></svg>
<div style="left:199px;top:70px;width:1469px;height:1px;background:#1a2426;"></div>
<div style="left:1565px;top:71px;width:103px;height:1px;background:rgba(255,255,255,.35);"></div>
<svg style="left:201px;top:77px" width="17" height="17" viewBox="0 0 16 16"><use href="#i-we"/></svg>
<div class="t s" style="left:222px;top:78px;text-shadow:0 0 5px #fff,0 0 8px #fff,0 0 3px #fff;">触发编辑器</div>
<div style="left:201px;top:99px;width:1466px;height:859px;background:#f0f0f0;"></div>
<div style="left:200px;top:98px;width:1468px;height:861px;border:1px solid #2c3a42;border-top-color:#3a484e;background:transparent;"></div>
<div style="left:201px;top:99px;width:1466px;height:21px;background:linear-gradient(#fcfdfe 0,#eef1f9 35%,#dde3f3 55%,#e2e7f6 100%);border-bottom:1px solid #a0a4b0;border-top:1px solid #fff;"></div>
<div class="t u" style="left:208px;top:103px;font-size:12px;-webkit-text-stroke-width:0.3px;">文件(F)</div>
<div class="t u" style="left:260px;top:103px;font-size:12px;-webkit-text-stroke-width:0.3px;">编辑(E)</div>
<div class="t u" style="left:313px;top:103px;font-size:12px;-webkit-text-stroke-width:0.3px;">新建(N)</div>
<div class="t u" style="left:369px;top:103px;font-size:12px;-webkit-text-stroke-width:0.3px;">模块(M)</div>
<div class="t u" style="left:428px;top:103px;font-size:12px;-webkit-text-stroke-width:0.3px;">窗口(W)</div>
<div class="t u" style="left:485px;top:103px;font-size:12px;-webkit-text-stroke-width:0.3px;">TESH</div>
<div class="btn" style="left:201px;top:124px;width:24px;height:22px;"><svg style="left:3px;top:2px" width="16" height="16" viewBox="0 0 16 16"><use href="#i-new"/></svg></div>
<div class="btn" style="left:225px;top:124px;width:24px;height:22px;"><svg style="left:3px;top:2px" width="16" height="16" viewBox="0 0 16 16"><use href="#i-open"/></svg></div>
<div class="btn" style="left:249px;top:124px;width:24px;height:22px;"><svg style="left:3px;top:2px" width="16" height="16" viewBox="0 0 16 16"><use href="#i-save"/></svg></div>
<div class="btn" style="left:281px;top:124px;width:24px;height:22px;"><svg style="left:3px;top:2px" width="16" height="16" viewBox="0 0 16 16"><use href="#i-cut-d"/></svg></div>
<div class="btn" style="left:305px;top:124px;width:24px;height:22px;"><svg style="left:3px;top:2px" width="16" height="16" viewBox="0 0 16 16"><use href="#i-copy-d"/></svg></div>
<div class="btn" style="left:329px;top:124px;width:24px;height:22px;"><svg style="left:3px;top:2px" width="16" height="16" viewBox="0 0 16 16"><use href="#i-paste-d"/></svg></div>
<div class="btn" style="left:361px;top:124px;width:24px;height:22px;"><svg style="left:3px;top:2px" width="16" height="16" viewBox="0 0 16 16"><use href="#i-undo-d"/></svg></div>
<div class="btn" style="left:385px;top:124px;width:24px;height:22px;"><svg style="left:3px;top:2px" width="16" height="16" viewBox="0 0 16 16"><use href="#i-redo-d"/></svg></div>
<div class="btn" style="left:417px;top:124px;width:24px;height:22px;"><svg style="left:3px;top:2px" width="16" height="16" viewBox="0 0 16 16"><use href="#i-x"/></svg></div>
<div class="btn" style="left:449px;top:124px;width:24px;height:22px;"><svg style="left:3px;top:2px" width="16" height="16" viewBox="0 0 16 16"><use href="#i-folder"/></svg></div>
<div class="btn" style="left:473px;top:124px;width:24px;height:22px;"><svg style="left:3px;top:2px" width="16" height="16" viewBox="0 0 16 16"><use href="#i-doc"/></svg></div>
<div class="btn" style="left:497px;top:124px;width:24px;height:22px;"><svg style="left:3px;top:2px" width="16" height="16" viewBox="0 0 16 16"><use href="#i-sep"/></svg></div>
<div class="btn" style="left:529px;top:124px;width:24px;height:22px;"><svg style="left:3px;top:2px" width="16" height="16" viewBox="0 0 16 16"><use href="#i-flag"/></svg></div>
<div class="btn" style="left:553px;top:124px;width:24px;height:22px;"><svg style="left:3px;top:2px" width="16" height="16" viewBox="0 0 16 16"><use href="#i-cond"/></svg></div>
<div class="btn" style="left:577px;top:124px;width:24px;height:22px;"><svg style="left:3px;top:2px" width="16" height="16" viewBox="0 0 16 16"><use href="#i-act"/></svg></div>
<div class="btn" style="left:609px;top:124px;width:24px;height:22px;"><svg style="left:3px;top:2px" width="16" height="16" viewBox="0 0 16 16"><use href="#i-terrain"/></svg></div>
<div class="btnp" style="left:633px;top:124px;width:24px;height:22px;"><svg style="left:3px;top:2px" width="16" height="16" viewBox="0 0 16 16"><use href="#i-a"/></svg></div>
<div class="btn" style="left:657px;top:124px;width:24px;height:22px;"><svg style="left:3px;top:2px" width="16" height="16" viewBox="0 0 16 16"><use href="#i-sound"/></svg></div>
<div class="btn" style="left:681px;top:124px;width:24px;height:22px;"><svg style="left:3px;top:2px" width="16" height="16" viewBox="0 0 16 16"><use href="#i-helm"/></svg></div>
<div class="btn" style="left:705px;top:124px;width:24px;height:22px;"><svg style="left:3px;top:2px" width="16" height="16" viewBox="0 0 16 16"><use href="#i-region"/></svg></div>
<div class="btn" style="left:729px;top:124px;width:24px;height:22px;"><svg style="left:3px;top:2px" width="16" height="16" viewBox="0 0 16 16"><use href="#i-orc"/></svg></div>
<div class="btn" style="left:753px;top:124px;width:24px;height:22px;"><svg style="left:3px;top:2px" width="16" height="16" viewBox="0 0 16 16"><use href="#i-cube"/></svg></div>
<div class="btn" style="left:777px;top:124px;width:24px;height:22px;"><svg style="left:3px;top:2px" width="16" height="16" viewBox="0 0 16 16"><use href="#i-import"/></svg></div>
<div class="btn" style="left:809px;top:124px;width:24px;height:22px;"><svg style="left:3px;top:2px" width="16" height="16" viewBox="0 0 16 16"><use href="#i-check"/></svg></div>
<div style="left:201px;top:148px;width:280px;height:810px;background:#fff;border-top:1px solid #828790;"></div>
<div style="left:464px;top:149px;width:16px;height:793px;background:linear-gradient(90deg,#e8e8e8,#f4f4f4 40%,#f0f0f0);"></div>
<svg style="left:468px;top:154px" width="9" height="6" viewBox="0 0 9 6"><path d="M0 5.500h9L4.500 1z" fill="#606060"/></svg>
<svg style="left:468px;top:930px" width="9" height="6" viewBox="0 0 9 6"><path d="M0 .5h9L4.500 5z" fill="#606060"/></svg>
<div style="left:465px;top:243px;width:15px;height:456px;border:1px solid #a8a8a8;border-radius:2px;background:linear-gradient(90deg,#f2f2f2 0,#e4e4e6 45%,#d2d2d6 50%,#dcdce0 100%);"><div style="left:3px;top:222px;width:7px;height:1px;background:#707070;"></div><div style="left:3px;top:224px;width:7px;height:1px;background:#707070;"></div><div style="left:3px;top:226px;width:7px;height:1px;background:#707070;"></div></div>
<div style="left:201px;top:942px;width:263px;height:16px;background:linear-gradient(#e8e8e8,#f4f4f4 40%,#f0f0f0);"></div>
<svg style="left:207px;top:945px" width="6" height="9" viewBox="0 0 6 9"><path d="M5.500 0v9L1 4.500z" fill="#505050"/></svg>
<svg style="left:452px;top:945px" width="6" height="9" viewBox="0 0 6 9"><path d="M.5 0v9L5 4.500z" fill="#505050"/></svg>
<div style="left:220px;top:943px;width:200px;height:14px;border:1px solid #a0a0a0;border-radius:2px;background:linear-gradient(#f4f4f4 0,#e6e6e8 45%,#d4d4d8 50%,#dedee2 100%);"><div style="left:96px;top:3px;width:1px;height:7px;background:#707070;"></div><div style="left:98px;top:3px;width:1px;height:7px;background:#707070;"></div><div style="left:100px;top:3px;width:1px;height:7px;background:#707070;"></div></div>
<div style="left:464px;top:942px;width:16px;height:16px;background:#f0f0f0;"></div>
<div style="left:480px;top:149px;width:1px;height:809px;background:#7c7c7c;"></div>
<div style="left:481px;top:149px;width:10px;height:809px;background:linear-gradient(90deg,#fdfefe 0,#f3f8fd 50%,#eaf1f9 100%);"></div>
<div class="cb" style="left:492px;top:149px;width:13px;height:13px;"><svg style="left:1px;top:1px" width="9" height="9" viewBox="0 0 9 9"><path d="M1 3.500l2.500 2.500L8 1.500v2.500L3.500 8.500 1 6z" fill="#000"/></svg></div>
<div class="t s" style="left:509px;top:149px;">允许<span class="l">(A)</span></div>
<div class="cb" style="left:611px;top:149px;width:13px;height:13px;"><svg style="left:1px;top:1px" width="9" height="9" viewBox="0 0 9 9"><path d="M1 3.500l2.500 2.500L8 1.500v2.500L3.500 8.500 1 6z" fill="#000"/></svg></div>
<div class="t s" style="left:629px;top:149px;">初始打开<span class="l">(I)</span></div>
<div class="t s" style="left:491px;top:168px;">触发器注释<span class="l">(C)</span></div>
<div style="left:491px;top:165px;width:1px;height:6px;background:#808080;"></div>
<div style="left:491px;top:184px;width:1px;height:5px;background:#808080;"></div>
<div style="left:491px;top:188px;width:1175px;height:173px;background:#fff;border:1px solid #7a7a7a;border-right:none;"></div>
<div style="left:1649px;top:189px;width:17px;height:171px;background:#f2f2f2;border-left:1px solid #fff;"></div>
<svg style="left:1654px;top:194px" width="8" height="5" viewBox="0 0 8 5"><path d="M0 4.500h8L4 .5z" fill="#a0a0a0"/></svg>
<svg style="left:1654px;top:350px" width="8" height="5" viewBox="0 0 8 5"><path d="M0 .5h8L4 4.500z" fill="#a0a0a0"/></svg>
<div style="left:486px;top:361px;width:1181px;height:13px;background:linear-gradient(#fbfcfe,#f1f5fa);"></div>
<div style="left:691px;top:373px;width:976px;height:2px;background:#6e6e6e;"></div>
<div style="left:1664px;top:360px;width:3px;height:15px;background:#7a8288;"></div>
<div style="left:486px;top:367px;width:205px;height:24px;background:#f0f0f0;"></div>
<div class="t s" style="left:491px;top:371px;">触发器函数<span class="l">(T)</span></div>
<div style="left:486px;top:374px;width:5px;height:1px;background:#707070;"></div>
<div style="left:491px;top:387px;width:1px;height:5px;background:#808080;"></div>
<div style="left:491px;top:391px;width:1175px;height:567px;background:#fff;border-top:1px solid #7a7a7a;border-left:1px solid #7a7a7a;"></div>
<div style="left:1649px;top:392px;width:17px;height:566px;background:linear-gradient(90deg,#e8e8e8,#f4f4f4 40%,#f0f0f0);"></div>
<svg style="left:1653px;top:397px" width="9" height="6" viewBox="0 0 9 6"><path d="M0 5.500h9L4.500 1z" fill="#404040"/></svg>
<svg style="left:1653px;top:946px" width="9" height="6" viewBox="0 0 9 6"><path d="M0 .5h9L4.500 5z" fill="#404040"/></svg>
<div style="left:1650px;top:499px;width:15px;height:441px;border:1px solid #a8a8a8;border-radius:2px;background:linear-gradient(90deg,#f2f2f2 0,#e4e4e6 45%,#d2d2d6 50%,#dcdce0 100%);"><div style="left:3px;top:216px;width:7px;height:1px;background:#707070;"></div><div style="left:3px;top:218px;width:7px;height:1px;background:#707070;"></div><div style="left:3px;top:220px;width:7px;height:1px;background:#707070;"></div></div>
<div style="left:202px;top:149px;width:262px;height:793px;overflow:hidden;"><div style="left:8px;top:0px;width:1px;height:793px;background:repeating-linear-gradient(#808080 0 1px,transparent 1px 2px);"></div><div style="left:27px;top:0px;width:1px;height:185px;background:repeating-linear-gradient(#808080 0 1px,transparent 1px 2px);"></div><div style="left:27px;top:208px;width:1px;height:41px;background:repeating-linear-gradient(#808080 0 1px,transparent 1px 2px);"></div><div style="left:27px;top:272px;width:1px;height:25px;background:repeating-linear-gradient(#808080 0 1px,transparent 1px 2px);"></div><div style="left:27px;top:320px;width:1px;height:329px;background:repeating-linear-gradient(#808080 0 1px,transparent 1px 2px);"></div><div style="left:27px;top:672px;width:1px;height:89px;background:repeating-linear-gradient(#808080 0 1px,transparent 1px 2px);"></div><div style="left:27px;top:784px;width:1px;height:10px;background:repeating-linear-gradient(#808080 0 1px,transparent 1px 2px);"></div><div style="left:29px;top:8px;width:9px;height:1px;background:repeating-linear-gradient(90deg,#808080 0 1px,transparent 1px 2px);"></div><svg style="left:39px;top:1px" width="14" height="14" viewBox="0 0 14 14"><use href="#i-tsep"/></svg><div class="t s" style="left:59px;top:1px;color:#3f983f;letter-spacing:-1.200px;font-size:12px;-webkit-text-stroke-width:0;">-----------</div><div style="left:29px;top:24px;width:9px;height:1px;background:repeating-linear-gradient(90deg,#808080 0 1px,transparent 1px 2px);"></div><svg style="left:39px;top:17px" width="14" height="15" viewBox="0 0 14 15"><use href="#i-tdoc"/></svg><div class="t s" style="left:59px;top:17px;">测试触发<span class="l"> </span><span class="d">011</span></div><div style="left:29px;top:40px;width:9px;height:1px;background:repeating-linear-gradient(90deg,#808080 0 1px,transparent 1px 2px);"></div><svg style="left:39px;top:33px" width="14" height="15" viewBox="0 0 14 15"><use href="#i-tdoc"/></svg><div class="t s" style="left:59px;top:33px;">特效创建<span class="l"> </span><span class="d">006</span></div><div style="left:29px;top:56px;width:9px;height:1px;background:repeating-linear-gradient(90deg,#808080 0 1px,transparent 1px 2px);"></div><svg style="left:39px;top:49px" width="14" height="14" viewBox="0 0 14 14"><use href="#i-tsep"/></svg><div class="t s" style="left:59px;top:49px;color:#3f983f;letter-spacing:-1.200px;font-size:12px;-webkit-text-stroke-width:0;">-----------</div><div style="left:29px;top:72px;width:9px;height:1px;background:repeating-linear-gradient(90deg,#808080 0 1px,transparent 1px 2px);"></div><svg style="left:39px;top:65px" width="14" height="15" viewBox="0 0 14 15"><use href="#i-tdoc"/></svg><div class="t s" style="left:59px;top:65px;">装备合成<span class="l"> </span><span class="d">007</span></div><div style="left:29px;top:88px;width:9px;height:1px;background:repeating-linear-gradient(90deg,#808080 0 1px,transparent 1px 2px);"></div><svg style="left:39px;top:81px" width="14" height="15" viewBox="0 0 14 15"><use href="#i-tdoc"/></svg><div class="t s" style="left:59px;top:81px;">天气系统<span class="l"> </span><span class="d">008</span></div><div style="left:29px;top:104px;width:9px;height:1px;background:repeating-linear-gradient(90deg,#808080 0 1px,transparent 1px 2px);"></div><svg style="left:39px;top:97px" width="14" height="15" viewBox="0 0 14 15"><use href="#i-tdoc"/></svg><div class="t s" style="left:59px;top:97px;">系统公告<span class="l"> </span><span class="d">009</span></div><div style="left:29px;top:120px;width:9px;height:1px;background:repeating-linear-gradient(90deg,#808080 0 1px,transparent 1px 2px);"></div><svg style="left:39px;top:113px" width="14" height="15" viewBox="0 0 14 15"><use href="#i-tdoc"/></svg><div class="t s" style="left:59px;top:113px;">区域可见<span class="l"> </span><span class="d">010</span></div><div style="left:29px;top:136px;width:9px;height:1px;background:repeating-linear-gradient(90deg,#808080 0 1px,transparent 1px 2px);"></div><svg style="left:39px;top:129px" width="14" height="15" viewBox="0 0 14 15"><use href="#i-tdoc"/></svg><div class="t s" style="left:59px;top:129px;">初始移动<span class="l"> </span><span class="d">012</span></div><div style="left:29px;top:152px;width:9px;height:1px;background:repeating-linear-gradient(90deg,#808080 0 1px,transparent 1px 2px);"></div><svg style="left:39px;top:145px" width="14" height="14" viewBox="0 0 14 14"><use href="#i-tsep"/></svg><div class="t s" style="left:59px;top:145px;color:#3f983f;letter-spacing:-1.200px;font-size:12px;-webkit-text-stroke-width:0;">-----------</div><div style="left:29px;top:168px;width:9px;height:1px;background:repeating-linear-gradient(90deg,#808080 0 1px,transparent 1px 2px);"></div><svg style="left:39px;top:161px" width="14" height="15" viewBox="0 0 14 15"><use href="#i-tdoc"/></svg><div class="t s" style="left:59px;top:161px;">视角调整<span class="l"> </span><span class="d">054</span></div><div style="left:29px;top:184px;width:9px;height:1px;background:repeating-linear-gradient(90deg,#808080 0 1px,transparent 1px 2px);"></div><svg style="left:39px;top:177px" width="14" height="15" viewBox="0 0 14 15"><use href="#i-tdoc"/></svg><div class="t s" style="left:59px;top:177px;">视角调整<span class="l"> </span><span class="d">055</span></div><div style="left:13px;top:200px;width:5px;height:1px;background:repeating-linear-gradient(90deg,#808080 0 1px,transparent 1px 2px);"></div><div style="left:4px;top:196px;width:9px;height:9px;background:#fff;border:1px solid #808080;"><div style="left:1px;top:3px;width:5px;height:1px;background:#000;"></div></div><svg style="left:18px;top:192px" width="17" height="16" viewBox="0 0 17 16"><use href="#i-tfolder"/></svg><div class="t s" style="left:39px;top:194px;">武器</div><div style="left:29px;top:216px;width:9px;height:1px;background:repeating-linear-gradient(90deg,#808080 0 1px,transparent 1px 2px);"></div><svg style="left:39px;top:209px" width="14" height="15" viewBox="0 0 14 15"><use href="#i-tdoc"/></svg><div class="t s" style="left:59px;top:209px;">武器专属<span class="l"> </span><span class="d">013</span></div><div style="left:29px;top:232px;width:9px;height:1px;background:repeating-linear-gradient(90deg,#808080 0 1px,transparent 1px 2px);"></div><svg style="left:39px;top:225px" width="14" height="15" viewBox="0 0 14 15"><use href="#i-tdoc"/></svg><div class="t s" style="left:59px;top:225px;">武器专属<span class="l"> </span><span class="d">014</span></div><div style="left:29px;top:248px;width:9px;height:1px;background:repeating-linear-gradient(90deg,#808080 0 1px,transparent 1px 2px);"></div><svg style="left:39px;top:241px" width="14" height="15" viewBox="0 0 14 15"><use href="#i-tdoc"/></svg><div class="t s" style="left:59px;top:241px;">武器专属<span class="l"> </span><span class="d">015</span></div><div style="left:13px;top:264px;width:5px;height:1px;background:repeating-linear-gradient(90deg,#808080 0 1px,transparent 1px 2px);"></div><div style="left:4px;top:260px;width:9px;height:9px;background:#fff;border:1px solid #808080;"><div style="left:1px;top:3px;width:5px;height:1px;background:#000;"></div></div><svg style="left:18px;top:256px" width="17" height="16" viewBox="0 0 17 16"><use href="#i-tfolder"/></svg><div class="t s" style="left:39px;top:258px;">出兵</div><div style="left:29px;top:280px;width:9px;height:1px;background:repeating-linear-gradient(90deg,#808080 0 1px,transparent 1px 2px);"></div><svg style="left:39px;top:273px" width="14" height="15" viewBox="0 0 14 15"><use href="#i-tdoc"/></svg><div class="t s" style="left:59px;top:273px;">出兵触发<span class="l"> </span><span class="d">016</span></div><div style="left:29px;top:296px;width:9px;height:1px;background:repeating-linear-gradient(90deg,#808080 0 1px,transparent 1px 2px);"></div><svg style="left:39px;top:289px" width="14" height="15" viewBox="0 0 14 15"><use href="#i-tdoc"/></svg><div class="t s" style="left:59px;top:289px;">出兵触发<span class="l"> </span><span class="d">017</span></div><div style="left:13px;top:312px;width:5px;height:1px;background:repeating-linear-gradient(90deg,#808080 0 1px,transparent 1px 2px);"></div><div style="left:4px;top:308px;width:9px;height:9px;background:#fff;border:1px solid #808080;"><div style="left:1px;top:3px;width:5px;height:1px;background:#000;"></div></div><svg style="left:18px;top:304px" width="17" height="16" viewBox="0 0 17 16"><use href="#i-tfolder"/></svg><div class="t s" style="left:39px;top:306px;">英雄选择复活</div><div style="left:29px;top:328px;width:9px;height:1px;background:repeating-linear-gradient(90deg,#808080 0 1px,transparent 1px 2px);"></div><svg style="left:39px;top:321px" width="14" height="14" viewBox="0 0 14 14"><use href="#i-tsep"/></svg><div class="t s" style="left:59px;top:321px;color:#3f983f;letter-spacing:-1.200px;font-size:12px;-webkit-text-stroke-width:0;">-----------</div><div style="left:29px;top:344px;width:9px;height:1px;background:repeating-linear-gradient(90deg,#808080 0 1px,transparent 1px 2px);"></div><svg style="left:39px;top:337px" width="14" height="15" viewBox="0 0 14 15"><use href="#i-tdoc"/></svg><div class="t s" style="left:59px;top:337px;">剑圣选择<span class="l"> </span><span class="d">018</span></div><div style="left:29px;top:360px;width:9px;height:1px;background:repeating-linear-gradient(90deg,#808080 0 1px,transparent 1px 2px);"></div><svg style="left:39px;top:353px" width="14" height="15" viewBox="0 0 14 15"><use href="#i-tdoc"/></svg><div class="t s" style="left:59px;top:353px;">剑圣选择<span class="l"> </span><span class="d">019</span></div><div style="left:29px;top:376px;width:9px;height:1px;background:repeating-linear-gradient(90deg,#808080 0 1px,transparent 1px 2px);"></div><svg style="left:39px;top:369px" width="14" height="15" viewBox="0 0 14 15"><use href="#i-tdoc"/></svg><div class="t s" style="left:59px;top:369px;">剑圣选择<span class="l"> </span><span class="d">020</span></div><div style="left:29px;top:392px;width:9px;height:1px;background:repeating-linear-gradient(90deg,#808080 0 1px,transparent 1px 2px);"></div><svg style="left:39px;top:385px" width="14" height="15" viewBox="0 0 14 15"><use href="#i-tdoc"/></svg><div class="t s" style="left:59px;top:385px;">剑圣选择<span class="l"> </span><span class="d">021</span></div><div style="left:29px;top:408px;width:9px;height:1px;background:repeating-linear-gradient(90deg,#808080 0 1px,transparent 1px 2px);"></div><svg style="left:39px;top:401px" width="14" height="15" viewBox="0 0 14 15"><use href="#i-tdoc"/></svg><div class="t s" style="left:59px;top:401px;">剑圣选择<span class="l"> </span><span class="d">022</span></div><div style="left:29px;top:424px;width:9px;height:1px;background:repeating-linear-gradient(90deg,#808080 0 1px,transparent 1px 2px);"></div><svg style="left:39px;top:417px" width="14" height="15" viewBox="0 0 14 15"><use href="#i-tdoc"/></svg><div class="t s" style="left:59px;top:417px;">剑圣选择<span class="l"> </span><span class="d">023</span></div><div style="left:29px;top:440px;width:9px;height:1px;background:repeating-linear-gradient(90deg,#808080 0 1px,transparent 1px 2px);"></div><svg style="left:39px;top:433px" width="14" height="14" viewBox="0 0 14 14"><use href="#i-tsep"/></svg><div class="t s" style="left:59px;top:433px;color:#3f983f;letter-spacing:-1.200px;font-size:12px;-webkit-text-stroke-width:0;">-----------</div><div style="left:29px;top:456px;width:9px;height:1px;background:repeating-linear-gradient(90deg,#808080 0 1px,transparent 1px 2px);"></div><svg style="left:39px;top:449px" width="14" height="15" viewBox="0 0 14 15"><use href="#i-tdoc"/></svg><div class="t s" style="left:59px;top:449px;">剑圣选择<span class="l"> </span><span class="d">024</span></div><div style="left:29px;top:472px;width:9px;height:1px;background:repeating-linear-gradient(90deg,#808080 0 1px,transparent 1px 2px);"></div><svg style="left:39px;top:465px" width="14" height="15" viewBox="0 0 14 15"><use href="#i-tdoc"/></svg><div class="t s" style="left:59px;top:465px;">剑圣选择<span class="l"> </span><span class="d">025</span></div><div style="left:29px;top:488px;width:9px;height:1px;background:repeating-linear-gradient(90deg,#808080 0 1px,transparent 1px 2px);"></div><svg style="left:39px;top:481px" width="14" height="15" viewBox="0 0 14 15"><use href="#i-tdoc"/></svg><div class="t s" style="left:59px;top:481px;">剑圣选择<span class="l"> </span><span class="d">026</span></div><div style="left:29px;top:504px;width:9px;height:1px;background:repeating-linear-gradient(90deg,#808080 0 1px,transparent 1px 2px);"></div><svg style="left:39px;top:497px" width="14" height="15" viewBox="0 0 14 15"><use href="#i-tdoc"/></svg><div class="t s" style="left:59px;top:497px;">剑圣选择<span class="l"> </span><span class="d">027</span></div><div style="left:29px;top:520px;width:9px;height:1px;background:repeating-linear-gradient(90deg,#808080 0 1px,transparent 1px 2px);"></div><svg style="left:39px;top:513px" width="14" height="15" viewBox="0 0 14 15"><use href="#i-tdoc"/></svg><div class="t s" style="left:59px;top:513px;">剑圣选择<span class="l"> </span><span class="d">028</span></div><div style="left:29px;top:536px;width:9px;height:1px;background:repeating-linear-gradient(90deg,#808080 0 1px,transparent 1px 2px);"></div><svg style="left:39px;top:529px" width="14" height="15" viewBox="0 0 14 15"><use href="#i-tdoc"/></svg><div class="t s" style="left:59px;top:529px;">剑圣选择<span class="l"> </span><span class="d">029</span></div><div style="left:29px;top:552px;width:9px;height:1px;background:repeating-linear-gradient(90deg,#808080 0 1px,transparent 1px 2px);"></div><svg style="left:39px;top:545px" width="14" height="14" viewBox="0 0 14 14"><use href="#i-tsep"/></svg><div class="t s" style="left:59px;top:545px;color:#3f983f;letter-spacing:-1.200px;font-size:12px;-webkit-text-stroke-width:0;">-----------</div><div style="left:29px;top:568px;width:9px;height:1px;background:repeating-linear-gradient(90deg,#808080 0 1px,transparent 1px 2px);"></div><svg style="left:39px;top:561px" width="14" height="15" viewBox="0 0 14 15"><use href="#i-tdoc"/></svg><div class="t s" style="left:59px;top:561px;">战士选择<span class="l"> </span><span class="d">050</span></div><div style="left:29px;top:584px;width:9px;height:1px;background:repeating-linear-gradient(90deg,#808080 0 1px,transparent 1px 2px);"></div><svg style="left:39px;top:577px" width="14" height="15" viewBox="0 0 14 15"><use href="#i-tdoc"/></svg><div class="t s" style="left:59px;top:577px;">战士选择<span class="l"> </span><span class="d">051</span></div><div style="left:29px;top:600px;width:9px;height:1px;background:repeating-linear-gradient(90deg,#808080 0 1px,transparent 1px 2px);"></div><svg style="left:39px;top:593px" width="14" height="15" viewBox="0 0 14 15"><use href="#i-tdoc"/></svg><div class="t s" style="left:59px;top:593px;">战士选择<span class="l"> </span><span class="d">052</span></div><div style="left:29px;top:616px;width:9px;height:1px;background:repeating-linear-gradient(90deg,#808080 0 1px,transparent 1px 2px);"></div><svg style="left:39px;top:609px" width="14" height="15" viewBox="0 0 14 15"><use href="#i-tdoc"/></svg><div style="left:57px;top:608px;width:76px;height:16px;background:#f2f2f2;border:1px solid #e4e4e4;"></div><div class="t s" style="left:59px;top:609px;">战士选择<span class="l"> </span><span class="d">053</span></div><div style="left:29px;top:632px;width:9px;height:1px;background:repeating-linear-gradient(90deg,#808080 0 1px,transparent 1px 2px);"></div><svg style="left:39px;top:625px" width="14" height="14" viewBox="0 0 14 14"><use href="#i-tsep"/></svg><div class="t s" style="left:59px;top:625px;color:#3f983f;letter-spacing:-1.200px;font-size:12px;-webkit-text-stroke-width:0;">-----------</div><div style="left:29px;top:648px;width:9px;height:1px;background:repeating-linear-gradient(90deg,#808080 0 1px,transparent 1px 2px);"></div><svg style="left:39px;top:641px" width="14" height="15" viewBox="0 0 14 15"><use href="#i-tdoc"/></svg><div class="t s" style="left:59px;top:641px;">英雄复活<span class="l"> </span><span class="d">030</span></div><div style="left:13px;top:664px;width:5px;height:1px;background:repeating-linear-gradient(90deg,#808080 0 1px,transparent 1px 2px);"></div><div style="left:4px;top:660px;width:9px;height:9px;background:#fff;border:1px solid #808080;"><div style="left:1px;top:3px;width:5px;height:1px;background:#000;"></div></div><svg style="left:18px;top:656px" width="17" height="16" viewBox="0 0 17 16"><use href="#i-tfolder"/></svg><div class="t s" style="left:39px;top:658px;">凶手奖励</div><div style="left:29px;top:680px;width:9px;height:1px;background:repeating-linear-gradient(90deg,#808080 0 1px,transparent 1px 2px);"></div><svg style="left:39px;top:673px" width="14" height="15" viewBox="0 0 14 15"><use href="#i-tdoc"/></svg><div class="t s" style="left:59px;top:673px;">玩家奖励<span class="l"> </span><span class="d">031</span></div><div style="left:29px;top:696px;width:9px;height:1px;background:repeating-linear-gradient(90deg,#808080 0 1px,transparent 1px 2px);"></div><svg style="left:39px;top:689px" width="14" height="15" viewBox="0 0 14 15"><use href="#i-tdoc"/></svg><div class="t s" style="left:59px;top:689px;">玩家奖励<span class="l"> </span><span class="d">032</span></div><div style="left:29px;top:712px;width:9px;height:1px;background:repeating-linear-gradient(90deg,#808080 0 1px,transparent 1px 2px);"></div><svg style="left:39px;top:705px" width="14" height="15" viewBox="0 0 14 15"><use href="#i-tdoc"/></svg><div class="t s" style="left:59px;top:705px;">玩家奖励<span class="l"> </span><span class="d">033</span></div><div style="left:29px;top:728px;width:9px;height:1px;background:repeating-linear-gradient(90deg,#808080 0 1px,transparent 1px 2px);"></div><svg style="left:39px;top:721px" width="14" height="15" viewBox="0 0 14 15"><use href="#i-tdoc"/></svg><div class="t s" style="left:59px;top:721px;">电脑奖励<span class="l"> </span><span class="d">034</span></div><div style="left:29px;top:744px;width:9px;height:1px;background:repeating-linear-gradient(90deg,#808080 0 1px,transparent 1px 2px);"></div><svg style="left:39px;top:737px" width="14" height="15" viewBox="0 0 14 15"><use href="#i-tdoc"/></svg><div class="t s" style="left:59px;top:737px;">玩家奖励<span class="l"> </span><span class="d">035</span></div><div style="left:29px;top:760px;width:9px;height:1px;background:repeating-linear-gradient(90deg,#808080 0 1px,transparent 1px 2px);"></div><svg style="left:39px;top:753px" width="14" height="15" viewBox="0 0 14 15"><use href="#i-tdoc"/></svg><div class="t s" style="left:59px;top:753px;">玩家奖励<span class="l"> </span><span class="d">036</span></div><div style="left:13px;top:776px;width:5px;height:1px;background:repeating-linear-gradient(90deg,#808080 0 1px,transparent 1px 2px);"></div><div style="left:4px;top:772px;width:9px;height:9px;background:#fff;border:1px solid #808080;"><div style="left:1px;top:3px;width:5px;height:1px;background:#000;"></div></div><svg style="left:18px;top:768px" width="17" height="16" viewBox="0 0 17 16"><use href="#i-tfolder"/></svg><div class="t s" style="left:39px;top:770px;">排行榜</div><div style="left:29px;top:792px;width:9px;height:1px;background:repeating-linear-gradient(90deg,#808080 0 1px,transparent 1px 2px);"></div><svg style="left:39px;top:785px" width="14" height="15" viewBox="0 0 14 15"><use href="#i-tdoc"/></svg><div class="t s" style="left:59px;top:785px;">排行人数<span class="l"> </span><span class="d">037</span></div></div>
<div style="left:492px;top:392px;width:1157px;height:566px;overflow:hidden;"><div style="left:8px;top:0px;width:1px;height:185px;background:repeating-linear-gradient(#808080 0 1px,transparent 1px 2px);"></div><div style="left:65px;top:0px;width:1px;height:89px;background:repeating-linear-gradient(#808080 0 1px,transparent 1px 2px);"></div><div style="left:103px;top:16px;width:1px;height:57px;background:repeating-linear-gradient(#808080 0 1px,transparent 1px 2px);"></div><div style="left:84px;top:96px;width:1px;height:9px;background:repeating-linear-gradient(#808080 0 1px,transparent 1px 2px);"></div><div style="left:103px;top:112px;width:1px;height:57px;background:repeating-linear-gradient(#808080 0 1px,transparent 1px 2px);"></div><div style="left:27px;top:192px;width:1px;height:25px;background:repeating-linear-gradient(#808080 0 1px,transparent 1px 2px);"></div><div style="left:46px;top:224px;width:1px;height:313px;background:repeating-linear-gradient(#808080 0 1px,transparent 1px 2px);"></div><div style="left:65px;top:240px;width:1px;height:9px;background:repeating-linear-gradient(#808080 0 1px,transparent 1px 2px);"></div><div style="left:84px;top:256px;width:1px;height:9px;background:repeating-linear-gradient(#808080 0 1px,transparent 1px 2px);"></div><div style="left:103px;top:272px;width:1px;height:73px;background:repeating-linear-gradient(#808080 0 1px,transparent 1px 2px);"></div><div style="left:122px;top:288px;width:1px;height:9px;background:repeating-linear-gradient(#808080 0 1px,transparent 1px 2px);"></div><div style="left:141px;top:304px;width:1px;height:25px;background:repeating-linear-gradient(#808080 0 1px,transparent 1px 2px);"></div><div style="left:122px;top:352px;width:1px;height:9px;background:repeating-linear-gradient(#808080 0 1px,transparent 1px 2px);"></div><div style="left:141px;top:368px;width:1px;height:9px;background:repeating-linear-gradient(#808080 0 1px,transparent 1px 2px);"></div><div style="left:65px;top:400px;width:1px;height:121px;background:repeating-linear-gradient(#808080 0 1px,transparent 1px 2px);"></div><div style="left:65px;top:544px;width:1px;height:9px;background:repeating-linear-gradient(#808080 0 1px,transparent 1px 2px);"></div><div style="left:89px;top:8px;width:6px;height:1px;background:repeating-linear-gradient(90deg,#808080 0 1px,transparent 1px 2px);"></div><div style="left:80px;top:4px;width:9px;height:9px;background:#fff;border:1px solid #808080;"><div style="left:1px;top:3px;width:5px;height:1px;background:#000;"></div></div><svg style="left:95px;top:0px" width="16" height="16" viewBox="0 0 16 16"><use href="#i-cond"/></svg><div class="t s" style="left:115px;top:1px;">条件</div><div style="left:105px;top:24px;width:9px;height:1px;background:repeating-linear-gradient(90deg,#808080 0 1px,transparent 1px 2px);"></div><svg style="left:114px;top:16px" width="16" height="16" viewBox="0 0 16 16"><use href="#i-q"/></svg><div class="t s" style="left:134px;top:17px;"><span class="l">((</span>触发单位<span class="l">) </span>的所有者<span class="l">) </span>等于<span class="l"> </span>玩家<span class="d">1</span><span class="l">(</span>红色<span class="l">)</span></div><div style="left:105px;top:40px;width:9px;height:1px;background:repeating-linear-gradient(90deg,#808080 0 1px,transparent 1px 2px);"></div><svg style="left:114px;top:32px" width="16" height="16" viewBox="0 0 16 16"><use href="#i-q"/></svg><div class="t s" style="left:134px;top:33px;"><span class="l">((</span>触发单位<span class="l">) </span>的所有者<span class="l">) </span>等于<span class="l"> </span>玩家<span class="d">2</span><span class="l">(</span>蓝色<span class="l">)</span></div><div style="left:105px;top:56px;width:9px;height:1px;background:repeating-linear-gradient(90deg,#808080 0 1px,transparent 1px 2px);"></div><svg style="left:114px;top:48px" width="16" height="16" viewBox="0 0 16 16"><use href="#i-q"/></svg><div class="t s" style="left:134px;top:49px;"><span class="l">((</span>触发单位<span class="l">) </span>的所有者<span class="l">) </span>等于<span class="l"> </span>玩家<span class="d">3</span><span class="l">(</span>青色<span class="l">)</span></div><div style="left:105px;top:72px;width:9px;height:1px;background:repeating-linear-gradient(90deg,#808080 0 1px,transparent 1px 2px);"></div><svg style="left:114px;top:64px" width="16" height="16" viewBox="0 0 16 16"><use href="#i-q"/></svg><div class="t s" style="left:134px;top:65px;"><span class="l">((</span>触发单位<span class="l">) </span>的所有者<span class="l">) </span>等于<span class="l"> </span>玩家<span class="d">4</span><span class="l">(</span>紫色<span class="l">)</span></div><div style="left:70px;top:88px;width:6px;height:1px;background:repeating-linear-gradient(90deg,#808080 0 1px,transparent 1px 2px);"></div><div style="left:61px;top:84px;width:9px;height:9px;background:#fff;border:1px solid #808080;"><div style="left:1px;top:3px;width:5px;height:1px;background:#000;"></div></div><svg style="left:76px;top:80px" width="16" height="16" viewBox="0 0 16 16"><use href="#i-q"/></svg><div class="t s" style="left:96px;top:81px;"><span class="l">Or - </span>任意条件成立</div><div style="left:89px;top:104px;width:6px;height:1px;background:repeating-linear-gradient(90deg,#808080 0 1px,transparent 1px 2px);"></div><div style="left:80px;top:100px;width:9px;height:9px;background:#fff;border:1px solid #808080;"><div style="left:1px;top:3px;width:5px;height:1px;background:#000;"></div></div><svg style="left:95px;top:96px" width="16" height="16" viewBox="0 0 16 16"><use href="#i-cond"/></svg><div class="t s" style="left:115px;top:97px;">条件</div><div style="left:105px;top:120px;width:9px;height:1px;background:repeating-linear-gradient(90deg,#808080 0 1px,transparent 1px 2px);"></div><svg style="left:114px;top:112px" width="16" height="16" viewBox="0 0 16 16"><use href="#i-q"/></svg><div class="t s" style="left:134px;top:113px;"><span class="l">((</span>触发单位<span class="l">) </span>的所有者<span class="l">) </span>等于<span class="l"> </span>玩家<span class="d">5</span><span class="l">(</span>黄色<span class="l">)</span></div><div style="left:105px;top:136px;width:9px;height:1px;background:repeating-linear-gradient(90deg,#808080 0 1px,transparent 1px 2px);"></div><svg style="left:114px;top:128px" width="16" height="16" viewBox="0 0 16 16"><use href="#i-q"/></svg><div class="t s" style="left:134px;top:129px;"><span class="l">((</span>触发单位<span class="l">) </span>的所有者<span class="l">) </span>等于<span class="l"> </span>玩家<span class="d">6</span><span class="l">(</span>橙色<span class="l">)</span></div><div style="left:105px;top:152px;width:9px;height:1px;background:repeating-linear-gradient(90deg,#808080 0 1px,transparent 1px 2px);"></div><svg style="left:114px;top:144px" width="16" height="16" viewBox="0 0 16 16"><use href="#i-q"/></svg><div class="t s" style="left:134px;top:145px;"><span class="l">((</span>触发单位<span class="l">) </span>的所有者<span class="l">) </span>等于<span class="l"> </span>玩家<span class="d">7</span><span class="l">(</span>绿色<span class="l">)</span></div><div style="left:105px;top:168px;width:9px;height:1px;background:repeating-linear-gradient(90deg,#808080 0 1px,transparent 1px 2px);"></div><svg style="left:114px;top:160px" width="16" height="16" viewBox="0 0 16 16"><use href="#i-q"/></svg><div class="t s" style="left:134px;top:161px;"><span class="l">((</span>触发单位<span class="l">) </span>的所有者<span class="l">) </span>等于<span class="l"> </span>玩家<span class="d">8</span><span class="l">(</span>粉红<span class="l">)</span></div><div style="left:13px;top:184px;width:6px;height:1px;background:repeating-linear-gradient(90deg,#808080 0 1px,transparent 1px 2px);"></div><div style="left:4px;top:180px;width:9px;height:9px;background:#fff;border:1px solid #808080;"><div style="left:1px;top:3px;width:5px;height:1px;background:#000;"></div></div><svg style="left:19px;top:176px" width="16" height="16" viewBox="0 0 16 16"><use href="#i-act"/></svg><div class="t s" style="left:39px;top:177px;">动作</div><div style="left:29px;top:200px;width:9px;height:1px;background:repeating-linear-gradient(90deg,#808080 0 1px,transparent 1px 2px);"></div><svg style="left:38px;top:192px" width="16" height="16" viewBox="0 0 16 16"><use href="#i-nt"/></svg><div class="t s" style="left:58px;top:193px;color:#5e3184;"><span class="l">[</span>逆天<span class="l">] - </span>设置<span class="l"> [</span>点<span class="l">] loc_d</span><span class="d">4</span><span class="l"> = (</span>战场区域<span class="l"> </span><span class="d">000</span><span class="l"> &lt;</span>预设<span class="l">&gt; </span>内的随机点<span class="l">)</span></div><div style="left:32px;top:216px;width:6px;height:1px;background:repeating-linear-gradient(90deg,#808080 0 1px,transparent 1px 2px);"></div><div style="left:23px;top:212px;width:9px;height:9px;background:#fff;border:1px solid #808080;"><div style="left:1px;top:3px;width:5px;height:1px;background:#000;"></div></div><svg style="left:38px;top:208px" width="16" height="16" viewBox="0 0 16 16"><use href="#i-q"/></svg><div class="t s" style="left:58px;top:209px;">如果<span class="l">(</span>所有的条件成立<span class="l">) </span>则运行<span class="l"> (Then - </span>动作<span class="l">) </span>否则运行<span class="l"> (Else - </span>动作<span class="l">)</span></div><div style="left:51px;top:232px;width:6px;height:1px;background:repeating-linear-gradient(90deg,#808080 0 1px,transparent 1px 2px);"></div><div style="left:42px;top:228px;width:9px;height:9px;background:#fff;border:1px solid #808080;"><div style="left:1px;top:3px;width:5px;height:1px;background:#000;"></div></div><svg style="left:57px;top:224px" width="16" height="16" viewBox="0 0 16 16"><use href="#i-cond"/></svg><div class="t s" style="left:77px;top:225px;"><span class="l">If - </span>条件</div><div style="left:70px;top:248px;width:6px;height:1px;background:repeating-linear-gradient(90deg,#808080 0 1px,transparent 1px 2px);"></div><div style="left:61px;top:244px;width:9px;height:9px;background:#fff;border:1px solid #808080;"><div style="left:1px;top:3px;width:5px;height:1px;background:#000;"></div></div><svg style="left:76px;top:240px" width="16" height="16" viewBox="0 0 16 16"><use href="#i-q"/></svg><div class="t s" style="left:96px;top:241px;"><span class="l">And - </span>所有条件成立</div><div style="left:89px;top:264px;width:6px;height:1px;background:repeating-linear-gradient(90deg,#808080 0 1px,transparent 1px 2px);"></div><div style="left:80px;top:260px;width:9px;height:9px;background:#fff;border:1px solid #808080;"><div style="left:1px;top:3px;width:5px;height:1px;background:#000;"></div></div><svg style="left:95px;top:256px" width="16" height="16" viewBox="0 0 16 16"><use href="#i-cond"/></svg><div class="t s" style="left:115px;top:257px;">条件</div><div style="left:108px;top:280px;width:6px;height:1px;background:repeating-linear-gradient(90deg,#808080 0 1px,transparent 1px 2px);"></div><div style="left:99px;top:276px;width:9px;height:9px;background:#fff;border:1px solid #808080;"><div style="left:1px;top:3px;width:5px;height:1px;background:#000;"></div></div><svg style="left:114px;top:272px" width="16" height="16" viewBox="0 0 16 16"><use href="#i-q"/></svg><div class="t s" style="left:134px;top:273px;"><span class="l">Or - </span>任意条件成立</div><div style="left:127px;top:296px;width:6px;height:1px;background:repeating-linear-gradient(90deg,#808080 0 1px,transparent 1px 2px);"></div><div style="left:118px;top:292px;width:9px;height:9px;background:#fff;border:1px solid #808080;"><div style="left:1px;top:3px;width:5px;height:1px;background:#000;"></div></div><svg style="left:133px;top:288px" width="16" height="16" viewBox="0 0 16 16"><use href="#i-cond"/></svg><div class="t s" style="left:153px;top:289px;">条件</div><div style="left:143px;top:312px;width:9px;height:1px;background:repeating-linear-gradient(90deg,#808080 0 1px,transparent 1px 2px);"></div><svg style="left:152px;top:304px" width="16" height="16" viewBox="0 0 16 16"><use href="#i-q"/></svg><div class="t s" style="left:172px;top:305px;"><span class="l">(</span>获取<span class="l"> ((</span>触发单位<span class="l">) </span>的所有者<span class="l">) </span>是否拥有<span class="l">:GLM </span>对应的商城道具<span class="l">.) </span>等于<span class="l"> TRUE</span></div><div style="left:143px;top:328px;width:9px;height:1px;background:repeating-linear-gradient(90deg,#808080 0 1px,transparent 1px 2px);"></div><svg style="left:152px;top:320px" width="16" height="16" viewBox="0 0 16 16"><use href="#i-q"/></svg><div class="t s" style="left:172px;top:321px;"><span class="l">(</span>获取<span class="l"> ((</span>触发单位<span class="l">) </span>的所有者<span class="l">) </span>是否拥有<span class="l">:GLMS </span>对应的商城道具<span class="l">.) </span>等于<span class="l"> TRUE</span></div><div style="left:108px;top:344px;width:6px;height:1px;background:repeating-linear-gradient(90deg,#808080 0 1px,transparent 1px 2px);"></div><div style="left:99px;top:340px;width:9px;height:9px;background:#fff;border:1px solid #808080;"><div style="left:1px;top:3px;width:5px;height:1px;background:#000;"></div></div><svg style="left:114px;top:336px" width="16" height="16" viewBox="0 0 16 16"><use href="#i-q"/></svg><div class="t s" style="left:134px;top:337px;"><span class="l">Or - </span>任意条件成立</div><div style="left:127px;top:360px;width:6px;height:1px;background:repeating-linear-gradient(90deg,#808080 0 1px,transparent 1px 2px);"></div><div style="left:118px;top:356px;width:9px;height:9px;background:#fff;border:1px solid #808080;"><div style="left:1px;top:3px;width:5px;height:1px;background:#000;"></div></div><svg style="left:133px;top:352px" width="16" height="16" viewBox="0 0 16 16"><use href="#i-cond"/></svg><div class="t s" style="left:153px;top:353px;">条件</div><div style="left:143px;top:376px;width:9px;height:1px;background:repeating-linear-gradient(90deg,#808080 0 1px,transparent 1px 2px);"></div><svg style="left:152px;top:368px" width="16" height="16" viewBox="0 0 16 16"><use href="#i-q"/></svg><div class="t s" style="left:172px;top:369px;"><span class="l">((</span>触发单位<span class="l">) </span>的类型<span class="l">) </span>等于<span class="l"> </span>灵魂</div><div style="left:51px;top:392px;width:6px;height:1px;background:repeating-linear-gradient(90deg,#808080 0 1px,transparent 1px 2px);"></div><div style="left:42px;top:388px;width:9px;height:9px;background:#fff;border:1px solid #808080;"><div style="left:1px;top:3px;width:5px;height:1px;background:#000;"></div></div><svg style="left:57px;top:384px" width="16" height="16" viewBox="0 0 16 16"><use href="#i-act"/></svg><div class="t s" style="left:77px;top:385px;"><span class="l">Then - </span>动作</div><div style="left:67px;top:408px;width:9px;height:1px;background:repeating-linear-gradient(90deg,#808080 0 1px,transparent 1px 2px);"></div><svg style="left:76px;top:400px" width="16" height="16" viewBox="0 0 16 16"><use href="#i-unit"/></svg><div class="t s" style="left:96px;top:401px;color:#7a0c0c;">单位<span class="l"> - </span>删除<span class="l"> (</span>触发单位<span class="l">)</span></div><div style="left:67px;top:424px;width:9px;height:1px;background:repeating-linear-gradient(90deg,#808080 0 1px,transparent 1px 2px);"></div><svg style="left:76px;top:416px" width="16" height="16" viewBox="0 0 16 16"><use href="#i-unit"/></svg><div class="t s" style="left:96px;top:417px;color:#7a0c0c;">单位<span class="l"> - </span>立即移动<span class="l"> </span>格罗姆<span class="l">-</span>地狱咆哮<span class="l"> </span><span class="d">0055</span><span class="l"> &lt;</span>预设<span class="l">&gt; </span>到<span class="l"> (loc_d</span><span class="d">4</span><span class="l">)</span></div><div style="left:67px;top:440px;width:9px;height:1px;background:repeating-linear-gradient(90deg,#808080 0 1px,transparent 1px 2px);"></div><svg style="left:76px;top:432px" width="16" height="16" viewBox="0 0 16 16"><use href="#i-unit"/></svg><div class="t s" style="left:96px;top:433px;color:#7a0c0c;">单位<span class="l"> - </span>改变<span class="l"> </span>格罗姆<span class="l">-</span>地狱咆哮<span class="l"> </span><span class="d">0055</span><span class="l"> &lt;</span>预设<span class="l">&gt; </span>所属为<span class="l"> ((</span>触发单位<span class="l">) </span>的所有者<span class="l">) </span>并<span class="l"> </span>改变颜色</div><div style="left:67px;top:456px;width:9px;height:1px;background:repeating-linear-gradient(90deg,#808080 0 1px,transparent 1px 2px);"></div><svg style="left:76px;top:448px" width="16" height="16" viewBox="0 0 16 16"><use href="#i-game"/></svg><div class="t s" style="left:96px;top:449px;">游戏<span class="l"> - </span>对<span class="l"> (</span>所有玩家<span class="l">) </span>发送文本信息<span class="l">: ((((</span>触发玩家<span class="l">) </span>的名字<span class="l">) + </span>获得：格罗姆<span class="l">-</span>地狱咆哮<span class="l">) + </span>“兽人永不为奴！”<span class="l">)</span></div><div style="left:67px;top:472px;width:9px;height:1px;background:repeating-linear-gradient(90deg,#808080 0 1px,transparent 1px 2px);"></div><svg style="left:76px;top:464px" width="16" height="16" viewBox="0 0 16 16"><use href="#i-cam"/></svg><div class="t s" style="left:96px;top:465px;">镜头<span class="l"> - </span>平移<span class="l"> ((</span>触发单位<span class="l">) </span>的所有者<span class="l">) </span>的镜头到<span class="l"> (loc_d</span><span class="d">4</span><span class="l">),</span>持续<span class="l"> </span><span class="d">0</span><span class="l">.</span><span class="d">00</span><span class="l"> </span>秒</div><div style="left:67px;top:488px;width:9px;height:1px;background:repeating-linear-gradient(90deg,#808080 0 1px,transparent 1px 2px);"></div><svg style="left:76px;top:480px" width="16" height="16" viewBox="0 0 16 16"><use href="#i-set"/></svg><div class="t s" style="left:96px;top:481px;">设置<span class="l"> Occupy[</span><span class="d">1</span><span class="l">] = TRUE</span></div><div style="left:67px;top:504px;width:9px;height:1px;background:repeating-linear-gradient(90deg,#808080 0 1px,transparent 1px 2px);"></div><svg style="left:76px;top:496px" width="16" height="16" viewBox="0 0 16 16"><use href="#i-point"/></svg><div class="t s" style="left:96px;top:497px;">点<span class="l"> - </span>清除<span class="l"> (loc_d</span><span class="d">4</span><span class="l">)</span></div><div style="left:67px;top:520px;width:9px;height:1px;background:repeating-linear-gradient(90deg,#808080 0 1px,transparent 1px 2px);"></div><svg style="left:76px;top:512px" width="16" height="16" viewBox="0 0 16 16"><use href="#i-trig"/></svg><div class="t s" style="left:96px;top:513px;">触发器<span class="l"> - </span>关闭<span class="l"> (</span>当前触发<span class="l">)</span></div><div style="left:51px;top:536px;width:6px;height:1px;background:repeating-linear-gradient(90deg,#808080 0 1px,transparent 1px 2px);"></div><div style="left:42px;top:532px;width:9px;height:9px;background:#fff;border:1px solid #808080;"><div style="left:1px;top:3px;width:5px;height:1px;background:#000;"></div></div><svg style="left:57px;top:528px" width="16" height="16" viewBox="0 0 16 16"><use href="#i-act"/></svg><div class="t s" style="left:77px;top:529px;"><span class="l">Else - </span>动作</div><div style="left:67px;top:552px;width:9px;height:1px;background:repeating-linear-gradient(90deg,#808080 0 1px,transparent 1px 2px);"></div><svg style="left:76px;top:544px" width="16" height="16" viewBox="0 0 16 16"><use href="#i-game"/></svg><div class="t s" style="left:96px;top:545px;">游戏<span class="l"> - </span>对<span class="l"> (</span>所有符合<span class="l"> (((</span>触发单位<span class="l">) </span>属于<span class="l"> ((</span>触发单位<span class="l">) </span>的所有者<span class="l">)) </span>等于<span class="l"> TRUE) </span>的玩家<span class="l">) </span>发送文本信息<span class="l">: </span>兽人永不为奴<span class="l">...</span></div></div>
<div style="left:0px;top:1012px;width:1920px;height:28px;background:#f0f0f0;border-top:1px solid #a8a8a8;"></div>
<div style="left:0px;top:1013px;width:1920px;height:1px;background:#fdfdfd;"></div>
<div style="left:384px;top:1014px;width:1px;height:25px;background:#a0a0a0;"></div>
<div style="left:1112px;top:1014px;width:1px;height:25px;background:#a0a0a0;"></div>
<div style="left:1668px;top:1014px;width:1px;height:25px;background:#a0a0a0;"></div>
<div style="left:0px;top:1013px;width:1px;height:26px;background:#a0a0a0;"></div>
<div class="t s" style="left:385px;top:1013px;">刷子<span class="l">: </span>单位<span class="l"> - </span>选择</div>
<div class="t s" style="left:1113px;top:1013px;">选择<span class="l">: </span>剑圣<span class="l">-</span>黑石<span class="l"> </span><span class="d">0010</span></div>
<div class="t s" style="left:1113px;top:1025px;">所有者<span class="l">: </span>中立被动<span class="l">, </span>等级<span class="l">: </span><span class="d">1</span></div>
<div class="t s" style="left:1669px;top:1013px;">时间<span class="l">: </span><span class="d">23</span><span class="l">:</span><span class="d">30</span></div>
<div class="t s" style="left:1669px;top:1025px;">对战地图<span class="l">: </span>否</div>
<div style="left:0px;top:1040px;width:1920px;height:8px;background:linear-gradient(90deg,#9db0d0 0,#8ea4cb 200px,#7d97c6 500px,#9fb2d6 700px,#8a9fc8 1000px,#6f82ad 1300px,#6a7a9f 1600px,#56688f 1920px);border-top:1px solid #5a6a8a;"></div>
<div style="left:0px;top:1041px;width:1920px;height:2px;background:linear-gradient(rgba(255,255,255,.5),rgba(255,255,255,0));"></div>
<div style="left:120px;top:1041px;width:58px;height:7px;background:linear-gradient(#dfe6f2,#b9c6de);border:1px solid #5f6f8f;border-bottom:none;border-radius:2px 2px 0 0;"></div>
<div style="left:182px;top:1041px;width:58px;height:7px;background:linear-gradient(#dfe6f2,#b9c6de);border:1px solid #5f6f8f;border-bottom:none;border-radius:2px 2px 0 0;"></div>
<div style="left:430px;top:1041px;width:58px;height:7px;background:linear-gradient(#dfe6f2,#b9c6de);border:1px solid #5f6f8f;border-bottom:none;border-radius:2px 2px 0 0;"></div>
<div style="left:492px;top:1041px;width:54px;height:7px;background:linear-gradient(#dfe6f2,#b9c6de);border:1px solid #5f6f8f;border-bottom:none;border-radius:2px 2px 0 0;"></div>
<div style="left:553px;top:1041px;width:60px;height:7px;background:linear-gradient(#dfe6f2,#b9c6de);border:1px solid #5f6f8f;border-bottom:none;border-radius:2px 2px 0 0;"></div>
<div style="left:616px;top:1041px;width:56px;height:7px;background:linear-gradient(#dfe6f2,#b9c6de);border:1px solid #5f6f8f;border-bottom:none;border-radius:2px 2px 0 0;"></div>
<div style="left:678px;top:1041px;width:58px;height:7px;background:linear-gradient(#dfe6f2,#b9c6de);border:1px solid #5f6f8f;border-bottom:none;border-radius:2px 2px 0 0;"></div>
<div style="left:10px;top:1042px;width:32px;height:12px;border-radius:50%;background:radial-gradient(#e8f0fa,#8aa0c8);border:1px solid #5a6a8a;"></div>
<div style="left:70px;top:1044px;width:8px;height:8px;border-radius:50%;background:#a0d020;"></div>
<div style="left:82px;top:1044px;width:8px;height:8px;border-radius:50%;background:#40a0e0;"></div>
<div style="left:1905px;top:1041px;width:15px;height:7px;background:#7a8aa8;border-left:1px solid #4a5a78;"></div>
<svg style="left:1820px;top:998px" width="100" height="50" viewBox="1820 998 100 50"><path d="M1868 1010q4-8 12-7M1871 1012q4-7 11-5M1874 1014q4-6 10-4" fill="none" stroke="#6a2c2c" stroke-width="1.500"/><path d="M1770 1036q14-8 20 0q2 6-6 8h-14z" fill="#fff"/></svg>
<svg style="left:1730px;top:1004px" width="190" height="44" viewBox="1730 1004 190 44"><path d="M1770 1034q10-10 16-2q4 8-6 12l-12-2z" fill="#fdf6f4" stroke="#7a3a3a" stroke-width="1"/><path d="M1774 1031l4 10M1779 1030l3 10" stroke="#8a3c3c" stroke-width="2"/><path d="M1737 1014l8 6q14-6 24 0l6-7q4 8 2 16q4 8-2 12q-16 8-34 0q-6-6-2-14q-2-8-2-13z" fill="#fdf8f6" stroke="#e8c8c8" stroke-width="1"/><path d="M1739 1016l5 6-4 3zM1773 1016l-5 5 5 4z" fill="#f4b8c0"/><ellipse cx="1747" cy="1026" rx="5" ry="4" fill="#6a2c2c" transform="rotate(-20 1747 1026)"/><ellipse cx="1766" cy="1027" rx="5" ry="4" fill="#6a2c2c" transform="rotate(20 1766 1027)"/><circle cx="1746" cy="1025" r="1.800" fill="#fff"/><circle cx="1765" cy="1026" r="1.800" fill="#fff"/><ellipse cx="1756" cy="1032" rx="4" ry="3" fill="#6a2c2c"/><path d="M1752 1037q4 3 8 0" fill="none" stroke="#6a2c2c" stroke-width="1"/><ellipse cx="1740" cy="1033" rx="3" ry="2" fill="#f8c0c8"/><ellipse cx="1772" cy="1034" rx="3" ry="2" fill="#f8c0c8"/><path d="M1776 1008l3-3M1777 1012l4-1M1776 1015l4 1" stroke="#b06060" stroke-width="1"/><text x="1797" y="1040" font-family="Liberation Sans,WenQuanYi Zen Hei,sans-serif" font-weight="bold" font-size="29" fill="#fff" stroke="#fff" stroke-width="1.200" textLength="121" lengthAdjust="spacingAndGlyphs">摇百万联盟</text></svg>

</body></html>
